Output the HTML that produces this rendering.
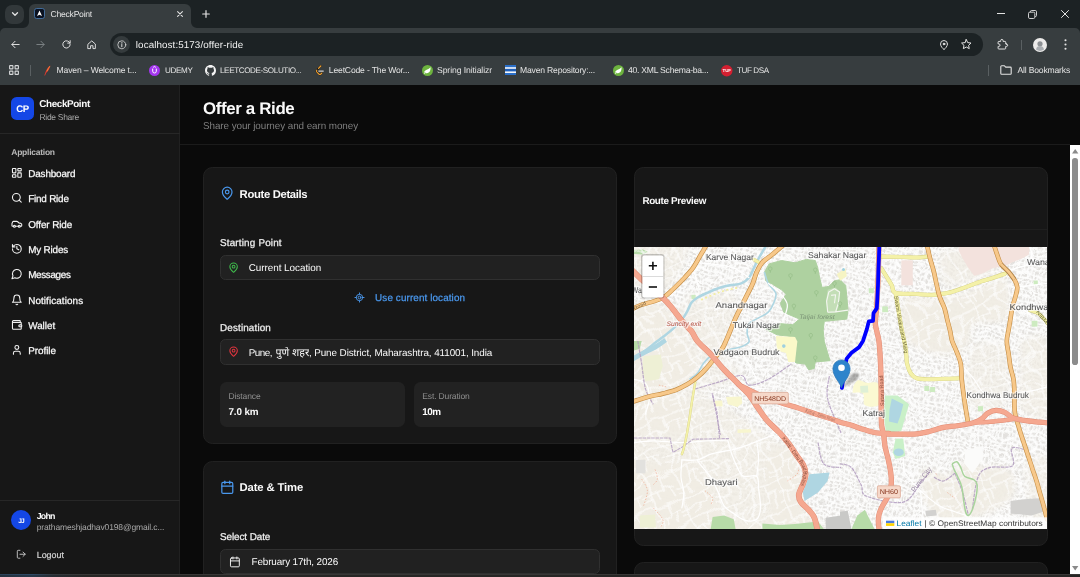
<!DOCTYPE html>
<html lang="en">
<head>
<meta charset="utf-8">
<title>CheckPoint</title>
<style>
html,body{margin:0;padding:0;background:#0a0a0a;}
.t,svg text{text-rendering:geometricPrecision;}
body{width:1080px;height:577px;overflow:hidden;position:relative;will-change:transform;font-family:"Liberation Sans","Noto Sans CJK JP",sans-serif;}
.t{position:absolute;white-space:nowrap;display:block;}
.b{position:absolute;box-sizing:border-box;}
.ic{position:absolute;display:block;overflow:visible;}
svg text{font-family:"Liberation Sans","Noto Sans CJK JP",sans-serif;}
</style>
</head>
<body>
<div class="b" style="left:0px;top:0px;width:1080px;height:85px;background:#1c2224;"></div>
<div class="b" style="left:0px;top:28px;width:1080px;height:57px;background:#373d3f;"></div>
<svg class="ic" style="left:0;top:28px" width="5" height="5" viewBox="0 0 5 5"><path d="M0 0h5a5 5 0 0 0-5 5z" fill="#1c2224"/></svg>
<svg class="ic" style="left:1075px;top:28px" width="5" height="5" viewBox="0 0 5 5"><path d="M5 0H0a5 5 0 0 1 5 5z" fill="#1c2224"/></svg>
<div class="b" style="left:4.6px;top:4.6px;width:19.2px;height:19.2px;background:#32383a;border-radius:7px;"></div>
<svg class="ic" style="left:10.500px;top:10.200px" width="8" height="8" viewBox="0 0 8 8" fill="none" stroke="#e3e3e3" stroke-width="1.3" stroke-linecap="round" stroke-linejoin="round"><path d="M1.5 2.8 4 5.3 6.500 2.800"/></svg>
<div class="b" style="left:28.5px;top:4.2px;width:162.5px;height:24.3px;background:#373d3f;border-radius:6px 6px 0 0;"></div>
<svg class="ic" style="left:22.5px;top:22px" width="6" height="6" viewBox="0 0 6 6"><path d="M6 0v6H0a6 6 0 0 0 6-6z" fill="#373d3f"/></svg>
<svg class="ic" style="left:191px;top:22px" width="6" height="6" viewBox="0 0 6 6"><path d="M0 0v6h6a6 6 0 0 1-6-6z" fill="#373d3f"/></svg>
<svg class="ic" style="left:34px;top:8.300px" width="11" height="11" viewBox="0 0 11 11"><rect x=".5" y=".5" width="10" height="10" rx="2.200" fill="#0b1220" stroke="#4b7fb8" stroke-width=".8"/><path d="M5.500 2.400 8 8 5.500 6.800 3 8z" fill="#fff"/></svg>
<span class="t" id="t1" style="left:50.50px;top:8.61px;font-size:8.6px;line-height:11.18px;font-weight:400;color:#e3e3e3;letter-spacing:-0.245px;">CheckPoint</span>
<svg class="ic" style="left:177px;top:10.800px" width="6" height="6" viewBox="0 0 6 6" stroke="#e3e3e3" stroke-width="1.100" stroke-linecap="round"><path d="M.6.600l4.800 4.800M5.400.600.600 5.400"/></svg>
<svg class="ic" style="left:202px;top:9.800px" width="8" height="8" viewBox="0 0 8 8" stroke="#e3e3e3" stroke-width="1.200" stroke-linecap="round"><path d="M4 .7v6.600M.7 4h6.600"/></svg>
<svg class="ic" style="left:997px;top:13px" width="8" height="1" viewBox="0 0 8 1"><rect width="8" height="1" fill="#e3e3e3"/></svg>
<svg class="ic" style="left:1027.500px;top:9.500px" width="9" height="9" viewBox="0 0 9 9" fill="none" stroke="#e3e3e3" stroke-width=".9"><rect x=".5" y="2.200" width="6.300" height="6.300" rx="1.300"/><path d="M2.400 2V1.700A1.200 1.200 0 0 1 3.600.5h3.700a1.200 1.200 0 0 1 1.200 1.200v3.700a1.200 1.200 0 0 1-1.200 1.200H7"/></svg>
<svg class="ic" style="left:1060.500px;top:9.500px" width="8" height="8" viewBox="0 0 8 8" stroke="#e3e3e3" stroke-width="1" stroke-linecap="round"><path d="M.5.500l7 7M7.500.500l-7 7"/></svg>
<svg class="ic" style="left:10.00px;top:39.00px" width="11" height="11" viewBox="0 0 24 24" fill="none" stroke="#e3e3e3" stroke-width="2.1" stroke-linecap="round" stroke-linejoin="round"><path d="M20 12H4.500M11 5l-7 7 7 7"/></svg>
<svg class="ic" style="left:35.00px;top:39.00px" width="11" height="11" viewBox="0 0 24 24" fill="none" stroke="#7d8385" stroke-width="2.1" stroke-linecap="round" stroke-linejoin="round"><path d="M4 12h15.500M13 5l7 7-7 7"/></svg>
<svg class="ic" style="left:60.50px;top:39.00px" width="11" height="11" viewBox="0 0 24 24" fill="none" stroke="#e3e3e3" stroke-width="2.1" stroke-linecap="round" stroke-linejoin="round"><path d="M19.500 9A8 8 0 1 0 20 12"/><path d="M20 3.500V9h-5.500"/></svg>
<svg class="ic" style="left:85.55px;top:38.75px" width="11.5" height="11.5" viewBox="0 0 24 24" fill="none" stroke="#e3e3e3" stroke-width="2" stroke-linecap="round" stroke-linejoin="round"><path d="M4.500 10.500 12 4l7.500 6.500V20h-5v-6h-5v6h-5z"/></svg>
<div class="b" style="left:110px;top:32.5px;width:872.5px;height:23px;background:#1c2224;border-radius:11.500px;"></div>
<div class="b" style="left:113.3px;top:36.2px;width:17px;height:17px;background:#353b3d;border-radius:8.500px;"></div>
<svg class="ic" style="left:117.00px;top:39.50px" width="9.6" height="9.6" viewBox="0 0 24 24" fill="none" stroke="#e3e3e3" stroke-width="1.9" stroke-linecap="round" stroke-linejoin="round"><circle cx="12" cy="12" r="10"/><path d="M12 11.200v5.600" stroke-width="2.400"/><circle cx="12" cy="7.300" r=".9" fill="#e3e3e3" stroke-width="1"/></svg>
<span class="t" id="t2" style="left:135.80px;top:39.53px;font-size:9.8px;line-height:12.74px;font-weight:400;color:#f2f2f2;letter-spacing:0.102px;">localhost:5173/offer-ride</span>
<svg class="ic" style="left:938.10px;top:39.30px" width="12" height="12" viewBox="0 0 24 24" fill="none" stroke="#e3e3e3" stroke-width="1.9" stroke-linecap="round" stroke-linejoin="round"><path d="M19 10c0 4.600-4.800 9.300-7 11.200C9.800 19.300 5 14.600 5 10a7 7 0 0 1 14 0"/><circle cx="12" cy="10" r="1.800" fill="#e3e3e3"/></svg>
<svg class="ic" style="left:960.40px;top:38.30px" width="12.6" height="12.6" viewBox="0 0 24 24" fill="none" stroke="#e3e3e3" stroke-width="1.9" stroke-linecap="round" stroke-linejoin="round"><path d="M12 3l2.700 5.800 6.300.8-4.600 4.400 1.200 6.300L12 17.200 6.400 20.300l1.200-6.300L3 9.600l6.300-.8z"/></svg>
<svg class="ic" style="left:996.30px;top:37.90px" width="12.6" height="12.6" viewBox="0 0 24 24" fill="none" stroke="#e3e3e3" stroke-width="1.9" stroke-linecap="round" stroke-linejoin="round"><path d="M20 11.500h-1.500V8a1.500 1.500 0 0 0-1.500-1.500h-3.500V5a2.300 2.300 0 0 0-4.600 0v1.500H5.500A1.500 1.500 0 0 0 4 8v3.300h1.300a2.400 2.400 0 0 1 0 4.800H4v3.400A1.500 1.500 0 0 0 5.500 21H17a1.500 1.500 0 0 0 1.500-1.500V16H20a2.250 2.250 0 0 0 0-4.500z"/></svg>
<div class="b" style="left:1020.5px;top:39.5px;width:1px;height:10.5px;background:#5a6062;"></div>
<svg class="ic" style="left:1032.500px;top:37.500px" width="14" height="14" viewBox="0 0 14 14"><circle cx="7" cy="7" r="7" fill="#ecebea"/><circle cx="7" cy="5.800" r="2.600" fill="#8c9094"/><path d="M3 11.500c.6-2.400 2-3.400 4-3.400s3.400 1 4 3.400A6.700 6.700 0 0 1 3 11.500z" fill="#a9adb1"/></svg>
<svg class="ic" style="left:1063.500px;top:39px" width="3" height="11" viewBox="0 0 3 11" fill="#e3e3e3"><circle cx="1.500" cy="1.300" r="1.050"/><circle cx="1.500" cy="5.500" r="1.050"/><circle cx="1.500" cy="9.700" r="1.050"/></svg>
<svg class="ic" style="left:8.500px;top:65.3px" width="10" height="10" viewBox="0 0 10 10" fill="none" stroke="#d6d8d9" stroke-width="1.100"><rect x=".6" y=".6" width="3.300" height="3.300" rx=".5"/><rect x="6.100" y=".6" width="3.300" height="3.300" rx=".5"/><rect x=".6" y="6.100" width="3.300" height="3.300" rx=".5"/><rect x="6.100" y="6.100" width="3.300" height="3.300" rx=".5"/></svg>
<div class="b" style="left:29.8px;top:64.5px;width:1px;height:11px;background:#5a6062;"></div>
<svg class="ic" style="left:41.500px;top:64.8px" width="10" height="11" viewBox="0 0 10 11"><path d="M8.300.6C6.500 1.700 4.700 4.200 3.400 7.300L2.300 10.400l.8.200 1-2.600C6.200 6.300 7.800 3.600 8.300.6z" fill="#e03a2f"/><path d="M7.900 1.200C6.800 2.600 5.800 4.300 5 6.200" stroke="#f7a541" stroke-width=".7" fill="none"/></svg>
<span class="t" id="t3" style="left:56.50px;top:64.91px;font-size:8.6px;line-height:11.18px;font-weight:400;color:#e3e3e3;letter-spacing:-0.148px;">Maven – Welcome t...</span>
<svg class="ic" style="left:149px;top:64.8px" width="11" height="11" viewBox="0 0 11 11"><circle cx="5.500" cy="5.500" r="5.500" fill="#a435f0"/><path d="M3.700 3.600v2.600a1.800 1.800 0 0 0 3.600 0V3.600M4.200 2.300 5.500 1.600l1.300.7" fill="none" stroke="#fff" stroke-width="1"/></svg>
<span class="t" id="t4" style="left:165.00px;top:66.03px;font-size:8.1px;line-height:10.53px;font-weight:400;color:#e3e3e3;letter-spacing:-0.347px;">UDEMY</span>
<svg class="ic" style="left:204.500px;top:64.8px" width="11" height="11" viewBox="0 0 16 16"><path fill="#f4f4f4" d="M8 0C3.580 0 0 3.580 0 8c0 3.540 2.290 6.530 5.470 7.590.4.070.55-.17.550-.38 0-.19-.01-.82-.01-1.490-2.010.37-2.530-.49-2.690-.94-.09-.23-.48-.94-.82-1.130-.28-.15-.68-.52-.01-.53.630-.01 1.080.58 1.230.82.720 1.210 1.870.87 2.330.66.070-.52.280-.87.510-1.070-1.780-.2-3.640-.89-3.640-3.950 0-.87.310-1.590.82-2.150-.08-.2-.36-1.020.08-2.120 0 0 .67-.21 2.200.820.640-.18 1.320-.27 2-.27s1.360.09 2 .27c1.530-1.040 2.200-.82 2.200-.82.440 1.100.16 1.920.08 2.120.51.560.82 1.270.82 2.150 0 3.070-1.870 3.750-3.650 3.950.29.250.54.730.54 1.480 0 1.070-.01 1.930-.01 2.200 0 .21.150.46.550.38A8.010 8.010 0 0 0 16 8c0-4.420-3.580-8-8-8z"/></svg>
<span class="t" id="t5" style="left:220.00px;top:66.03px;font-size:8.1px;line-height:10.53px;font-weight:400;color:#e3e3e3;letter-spacing:-0.385px;">LEETCODE-SOLUTIO...</span>
<svg class="ic" style="left:313.500px;top:64.8px" width="11" height="11" viewBox="0 0 11 11" fill="none" stroke-linecap="round"><path d="M6.800 1 2.900 5a1.500 1.500 0 0 0 0 2.100l1.900 1.900a1.500 1.500 0 0 0 2.100 0l1-1" stroke="#0b0b0b" stroke-width="1.700"/><path d="M6.800 1 4.500 3.400" stroke="#f0a030" stroke-width="1.300"/><path d="M2.900 5a1.500 1.500 0 0 0 0 2.100l1.900 1.900a1.500 1.500 0 0 0 2.100 0l1-1" stroke="#f0a030" stroke-width="1.100"/><path d="M4.800 6.100h4.500" stroke="#cfcfcf" stroke-width="1.100"/></svg>
<span class="t" id="t6" style="left:328.80px;top:64.91px;font-size:8.6px;line-height:11.18px;font-weight:400;color:#e3e3e3;letter-spacing:-0.168px;">LeetCode - The Wor...</span>
<svg class="ic" style="left:421.500px;top:64.8px" width="11" height="11" viewBox="0 0 11 11"><circle cx="5.500" cy="5.500" r="5.500" fill="#6db33f"/><path d="M8.600 2.300c.1 2.900-.7 5.600-3.800 5.900-1.300.1-2.300-.4-2.600-1.200C3.500 4.300 6.300 5 8.600 2.300z" fill="#fff"/><circle cx="2.700" cy="8.200" r=".55" fill="#fff"/></svg>
<span class="t" id="t7" style="left:437.00px;top:64.91px;font-size:8.6px;line-height:11.18px;font-weight:400;color:#e3e3e3;letter-spacing:-0.080px;">Spring Initializr</span>
<svg class="ic" style="left:504.500px;top:65.3px" width="11" height="10" viewBox="0 0 11 10"><rect width="11" height="10" fill="#f5f7fa"/><rect y="0" width="11" height="2.200" fill="#2a6fc9"/><rect y="3.800" width="11" height="2.600" fill="#1f5fb8"/><rect y="8" width="11" height="2" fill="#2a6fc9"/></svg>
<span class="t" id="t8" style="left:520.00px;top:64.91px;font-size:8.6px;line-height:11.18px;font-weight:400;color:#e3e3e3;letter-spacing:-0.191px;">Maven Repository:...</span>
<svg class="ic" style="left:613px;top:64.8px" width="11" height="11" viewBox="0 0 11 11"><circle cx="5.500" cy="5.500" r="5.500" fill="#6db33f"/><path d="M8.600 2.300c.1 2.900-.7 5.600-3.800 5.900-1.300.1-2.300-.4-2.600-1.200C3.500 4.300 6.300 5 8.600 2.300z" fill="#fff"/><circle cx="2.700" cy="8.200" r=".55" fill="#fff"/></svg>
<span class="t" id="t9" style="left:628.00px;top:64.91px;font-size:8.6px;line-height:11.18px;font-weight:400;color:#e3e3e3;letter-spacing:-0.244px;">40. XML Schema-ba...</span>
<svg class="ic" style="left:720.500px;top:64.8px" width="11.500" height="11.500" viewBox="0 0 12 12"><circle cx="6" cy="6" r="6" fill="#d41f30"/><text x="6" y="7.700" font-size="4.600" font-weight="700" fill="#fff" text-anchor="middle">TUF</text></svg>
<span class="t" id="t10" style="left:737.00px;top:66.03px;font-size:8.1px;line-height:10.53px;font-weight:400;color:#e3e3e3;letter-spacing:-0.404px;">TUF DSA</span>
<div class="b" style="left:988px;top:64.5px;width:1px;height:11px;background:#5a6062;"></div>
<svg class="ic" style="left:1000px;top:65.3px" width="12" height="10" viewBox="0 0 12 10" fill="none" stroke="#e3e3e3" stroke-width="1.100" stroke-linejoin="round"><path d="M.8 1.600a.8.800 0 0 1 .8-.8h2.900l1.200 1.300h4.700a.8.800 0 0 1 .8.800v5.500a.8.800 0 0 1-.8.800H1.600a.8.800 0 0 1-.8-.8z"/></svg>
<span class="t" id="t11" style="left:1017.50px;top:64.91px;font-size:8.6px;line-height:11.18px;font-weight:400;color:#e3e3e3;letter-spacing:-0.186px;">All Bookmarks</span>
<div class="b" style="left:0px;top:85px;width:1080px;height:492px;background:#0a0a0a;"></div>
<div class="b" style="left:0px;top:85px;width:180.2px;height:492px;background:#171717;border-right:1px solid #212121;"></div>
<div class="b" style="left:11.25px;top:97px;width:22.5px;height:22.5px;background:#1447e6;border-radius:5.600px;"></div>
<span class="t" id="t12" style="left:16.30px;top:104.26px;font-size:9.6px;line-height:12.48px;font-weight:700;color:#ffffff;letter-spacing:-0.414px;">CP</span>
<span class="t" id="t13" style="left:39.30px;top:98.66px;font-size:9.9px;line-height:12.87px;font-weight:700;color:#fafafa;letter-spacing:-0.383px;">CheckPoint</span>
<span class="t" id="t14" style="left:39.50px;top:112.07px;font-size:8.5px;line-height:11.05px;font-weight:400;color:#a8a8a8;letter-spacing:-0.303px;">Ride Share</span>
<div class="b" style="left:0px;top:132.5px;width:180px;height:1px;background:#272727;"></div>
<span class="t" id="t15" style="left:11.30px;top:146.68px;font-size:8.5px;line-height:11.05px;font-weight:700;color:#b8b8b8;letter-spacing:-0.253px;">Application</span>
<svg class="ic" style="left:10.95px;top:166.95px" width="11.7" height="11.7" viewBox="0 0 24 24" fill="none" stroke="#f2f2f2" stroke-width="2.2" stroke-linecap="round" stroke-linejoin="round"><rect width="7" height="9" x="3" y="3" rx="1"/><rect width="7" height="5" x="14" y="3" rx="1"/><rect width="7" height="9" x="14" y="12" rx="1"/><rect width="7" height="5" x="3" y="16" rx="1"/></svg>
<span class="t" id="t16" style="left:28.20px;top:168.97px;font-size:9.9px;line-height:12.87px;font-weight:400;color:#fafafa;letter-spacing:-0.124px;-webkit-text-stroke:.25px #fafafa;">Dashboard</span>
<svg class="ic" style="left:10.95px;top:192.26px" width="11.7" height="11.7" viewBox="0 0 24 24" fill="none" stroke="#f2f2f2" stroke-width="2.2" stroke-linecap="round" stroke-linejoin="round"><circle cx="11" cy="11" r="8"/><path d="m21 21-4.3-4.3"/></svg>
<span class="t" id="t17" style="left:28.20px;top:194.28px;font-size:9.9px;line-height:12.87px;font-weight:400;color:#fafafa;letter-spacing:-0.196px;-webkit-text-stroke:.25px #fafafa;">Find Ride</span>
<svg class="ic" style="left:10.95px;top:217.57px" width="11.7" height="11.7" viewBox="0 0 24 24" fill="none" stroke="#f2f2f2" stroke-width="2.2" stroke-linecap="round" stroke-linejoin="round"><path d="M19 17h2c.6 0 1-.4 1-1v-3c0-.9-.7-1.700-1.500-1.900C18.700 10.600 16 10 16 10s-1.300-1.400-2.200-2.300c-.5-.4-1.100-.7-1.800-.7H5c-.6 0-1.100.4-1.400.9l-1.400 2.900A3.700 3.700 0 0 0 2 12v4c0 .6.400 1 1 1h2"/><circle cx="7" cy="17" r="2"/><path d="M9 17h6"/><circle cx="17" cy="17" r="2"/></svg>
<span class="t" id="t18" style="left:28.20px;top:219.59px;font-size:9.9px;line-height:12.87px;font-weight:400;color:#fafafa;letter-spacing:-0.083px;-webkit-text-stroke:.25px #fafafa;">Offer Ride</span>
<svg class="ic" style="left:10.95px;top:242.88px" width="11.7" height="11.7" viewBox="0 0 24 24" fill="none" stroke="#f2f2f2" stroke-width="2.2" stroke-linecap="round" stroke-linejoin="round"><path d="M3 12a9 9 0 1 0 9-9 9.750 9.750 0 0 0-6.740 2.740L3 8"/><path d="M3 3v5h5"/><path d="M12 7v5l4 2"/></svg>
<span class="t" id="t19" style="left:28.20px;top:244.89px;font-size:9.9px;line-height:12.87px;font-weight:400;color:#fafafa;letter-spacing:-0.170px;-webkit-text-stroke:.25px #fafafa;">My Rides</span>
<svg class="ic" style="left:10.95px;top:268.19px" width="11.7" height="11.7" viewBox="0 0 24 24" fill="none" stroke="#f2f2f2" stroke-width="2.2" stroke-linecap="round" stroke-linejoin="round"><path d="M7.900 20A9 9 0 1 0 4 16.100L2 22Z"/></svg>
<span class="t" id="t20" style="left:28.20px;top:270.20px;font-size:9.9px;line-height:12.87px;font-weight:400;color:#fafafa;letter-spacing:-0.339px;-webkit-text-stroke:.25px #fafafa;">Messages</span>
<svg class="ic" style="left:10.95px;top:293.50px" width="11.7" height="11.7" viewBox="0 0 24 24" fill="none" stroke="#f2f2f2" stroke-width="2.2" stroke-linecap="round" stroke-linejoin="round"><path d="M6 8a6 6 0 0 1 12 0c0 7 3 9 3 9H3s3-2 3-9"/><path d="M10.300 21a1.940 1.940 0 0 0 3.400 0"/></svg>
<span class="t" id="t21" style="left:28.20px;top:295.51px;font-size:9.9px;line-height:12.87px;font-weight:400;color:#fafafa;letter-spacing:0.093px;-webkit-text-stroke:.25px #fafafa;">Notifications</span>
<svg class="ic" style="left:10.95px;top:318.81px" width="11.7" height="11.7" viewBox="0 0 24 24" fill="none" stroke="#f2f2f2" stroke-width="2.2" stroke-linecap="round" stroke-linejoin="round"><path d="M19 7V4a1 1 0 0 0-1-1H5a2 2 0 0 0 0 4h15a1 1 0 0 1 1 1v4h-3a2 2 0 0 0 0 4h3a1 1 0 0 0 1-1v-2a1 1 0 0 0-1-1"/><path d="M3 5v14a2 2 0 0 0 2 2h15a1 1 0 0 0 1-1v-4"/></svg>
<span class="t" id="t22" style="left:28.20px;top:320.82px;font-size:9.9px;line-height:12.87px;font-weight:400;color:#fafafa;letter-spacing:-0.013px;-webkit-text-stroke:.25px #fafafa;">Wallet</span>
<svg class="ic" style="left:10.95px;top:344.12px" width="11.7" height="11.7" viewBox="0 0 24 24" fill="none" stroke="#f2f2f2" stroke-width="2.2" stroke-linecap="round" stroke-linejoin="round"><path d="M19 21v-2a4 4 0 0 0-4-4H9a4 4 0 0 0-4 4v2"/><circle cx="12" cy="7" r="4"/></svg>
<span class="t" id="t23" style="left:28.20px;top:346.13px;font-size:9.9px;line-height:12.87px;font-weight:400;color:#fafafa;letter-spacing:-0.029px;-webkit-text-stroke:.25px #fafafa;">Profile</span>
<div class="b" style="left:0px;top:499.5px;width:180px;height:1px;background:#272727;"></div>
<div class="b" style="left:11.2px;top:510.3px;width:19.8px;height:19.8px;background:#1447e6;border-radius:50%;"></div>
<span class="t" id="t24" style="left:18.20px;top:517.61px;font-size:6.6px;line-height:8.58px;font-weight:700;color:#fff;letter-spacing:-0.772px;">JJ</span>
<span class="t" id="t25" style="left:36.70px;top:510.88px;font-size:8.8px;line-height:11.44px;font-weight:700;color:#fafafa;letter-spacing:-0.754px;">John</span>
<span class="t" id="t26" style="left:36.70px;top:522.38px;font-size:8.5px;line-height:11.05px;font-weight:400;color:#a8a8a8;letter-spacing:-0.129px;">prathameshjadhav0198@gmail.c...</span>
<svg class="ic" style="left:16.25px;top:549.15px" width="10.5" height="10.5" viewBox="0 0 24 24" fill="none" stroke="#d0d0d0" stroke-width="2" stroke-linecap="round" stroke-linejoin="round"><path d="M9 21H5a2 2 0 0 1-2-2V5a2 2 0 0 1 2-2h4"/><polyline points="16 17 21 12 16 7"/><line x1="21" x2="9" y1="12" y2="12"/></svg>
<span class="t" id="t27" style="left:36.70px;top:550.12px;font-size:8.9px;line-height:11.57px;font-weight:400;color:#d6d6d6;letter-spacing:0.007px;-webkit-text-stroke:.2px #d6d6d6;">Logout</span>
<span class="t" id="t28" style="left:202.90px;top:98.22px;font-size:16.9px;line-height:21.97px;font-weight:700;color:#fafafa;letter-spacing:-0.354px;">Offer a Ride</span>
<span class="t" id="t29" style="left:203.00px;top:121.46px;font-size:9.9px;line-height:12.87px;font-weight:400;color:#7f7f7f;letter-spacing:-0.077px;">Share your journey and earn money</span>
<div class="b" style="left:180.2px;top:144px;width:890px;height:1px;background:#1b1b1b;"></div>
<div class="b" style="left:202.5px;top:167px;width:414.5px;height:276.5px;background:#171717;border:1px solid #212121;border-radius:9.500px;"></div>
<svg class="ic" style="left:220.00px;top:186.10px" width="14.4" height="14.4" viewBox="0 0 24 24" fill="none" stroke="#4a98ee" stroke-width="2" stroke-linecap="round" stroke-linejoin="round"><path d="M20 10c0 4.993-5.539 10.193-7.399 11.799a1 1 0 0 1-1.202 0C9.539 20.193 4 14.993 4 10a8 8 0 0 1 16 0"/><circle cx="12" cy="10" r="3"/></svg>
<span class="t" id="t30" style="left:239.60px;top:187.96px;font-size:11.3px;line-height:14.69px;font-weight:700;color:#fafafa;letter-spacing:-0.346px;">Route Details</span>
<span class="t" id="t31" style="left:220.00px;top:237.67px;font-size:9.9px;line-height:12.87px;font-weight:400;color:#f0f0f0;letter-spacing:0.179px;-webkit-text-stroke:.25px #f0f0f0;">Starting Point</span>
<div class="b" style="left:220px;top:255px;width:379.5px;height:25px;background:#212121;border:1px solid #303030;border-radius:5.500px;"></div>
<svg class="ic" style="left:228.30px;top:261.90px" width="11.2" height="11.2" viewBox="0 0 24 24" fill="none" stroke="#3fbb4c" stroke-width="2.2" stroke-linecap="round" stroke-linejoin="round"><path d="M20 10c0 4.993-5.539 10.193-7.399 11.799a1 1 0 0 1-1.202 0C9.539 20.193 4 14.993 4 10a8 8 0 0 1 16 0"/><circle cx="12" cy="10" r="3"/></svg>
<span class="t" id="t32" style="left:248.70px;top:263.47px;font-size:9.9px;line-height:12.87px;font-weight:400;color:#fafafa;letter-spacing:-0.032px;">Current Location</span>
<svg class="ic" style="left:354.20px;top:292.10px" width="11" height="11" viewBox="0 0 24 24" fill="none" stroke="#4a98ee" stroke-width="2" stroke-linecap="round" stroke-linejoin="round"><line x1="2" x2="5" y1="12" y2="12"/><line x1="19" x2="22" y1="12" y2="12"/><line x1="12" x2="12" y1="2" y2="5"/><line x1="12" x2="12" y1="19" y2="22"/><circle cx="12" cy="12" r="7"/><circle cx="12" cy="12" r="3"/></svg>
<span class="t" id="t33" style="left:375.10px;top:292.56px;font-size:9.9px;line-height:12.87px;font-weight:400;color:#4a98ee;letter-spacing:0.109px;-webkit-text-stroke:.25px #4a98ee;">Use current location</span>
<span class="t" id="t34" style="left:220.00px;top:323.26px;font-size:9.9px;line-height:12.87px;font-weight:400;color:#f0f0f0;letter-spacing:0.145px;-webkit-text-stroke:.25px #f0f0f0;">Destination</span>
<div class="b" style="left:220px;top:339.2px;width:379.5px;height:25.6px;background:#212121;border:1px solid #303030;border-radius:5.500px;"></div>
<svg class="ic" style="left:228.30px;top:346.40px" width="11.2" height="11.2" viewBox="0 0 24 24" fill="none" stroke="#e0353f" stroke-width="2.2" stroke-linecap="round" stroke-linejoin="round"><path d="M20 10c0 4.993-5.539 10.193-7.399 11.799a1 1 0 0 1-1.202 0C9.539 20.193 4 14.993 4 10a8 8 0 0 1 16 0"/><circle cx="12" cy="10" r="3"/></svg>
<span class="t" id="t35" style="left:248.70px;top:348.06px;font-size:9.9px;line-height:12.87px;font-weight:400;color:#fafafa;letter-spacing:-0.502px;">Pune,</span>
<span class="t" id="t36" style="left:275.50px;top:347.11px;font-size:10.6px;line-height:13.78px;font-weight:400;color:#fafafa;width:33px;overflow:hidden;">पुणे शहर</span>
<span class="t" id="t37" style="left:308.90px;top:348.06px;font-size:9.9px;line-height:12.87px;font-weight:400;color:#fafafa;letter-spacing:-0.086px;">, Pune District, Maharashtra, 411001, India</span>
<div class="b" style="left:220px;top:381.8px;width:185px;height:45.4px;background:#222222;border-radius:6.500px;"></div>
<div class="b" style="left:413.8px;top:381.8px;width:185.7px;height:45.4px;background:#222222;border-radius:6.500px;"></div>
<span class="t" id="t38" style="left:228.50px;top:391.18px;font-size:8.5px;line-height:11.05px;font-weight:400;color:#8f8f8f;letter-spacing:-0.135px;">Distance</span>
<span class="t" id="t39" style="left:228.50px;top:406.87px;font-size:9.9px;line-height:12.87px;font-weight:700;color:#fafafa;letter-spacing:-0.125px;">7.0 km</span>
<span class="t" id="t40" style="left:422.30px;top:391.18px;font-size:8.5px;line-height:11.05px;font-weight:400;color:#8f8f8f;letter-spacing:-0.142px;">Est. Duration</span>
<span class="t" id="t41" style="left:422.30px;top:406.87px;font-size:9.9px;line-height:12.87px;font-weight:700;color:#fafafa;letter-spacing:-0.489px;">10m</span>
<div class="b" style="left:202.5px;top:461.2px;width:414.5px;height:130px;background:#171717;border:1px solid #212121;border-radius:9.500px;"></div>
<svg class="ic" style="left:219.50px;top:479.50px" width="14.6" height="14.6" viewBox="0 0 24 24" fill="none" stroke="#4a98ee" stroke-width="2" stroke-linecap="round" stroke-linejoin="round"><path d="M8 2v4"/><path d="M16 2v4"/><rect width="18" height="18" x="3" y="4" rx="2"/><path d="M3 10h18"/></svg>
<span class="t" id="t42" style="left:239.60px;top:481.35px;font-size:11.3px;line-height:14.69px;font-weight:700;color:#fafafa;letter-spacing:-0.145px;">Date &amp; Time</span>
<span class="t" id="t43" style="left:220.00px;top:532.16px;font-size:9.9px;line-height:12.87px;font-weight:400;color:#f0f0f0;letter-spacing:-0.069px;-webkit-text-stroke:.25px #f0f0f0;">Select Date</span>
<div class="b" style="left:220px;top:548.9px;width:379.5px;height:25.3px;background:#212121;border:1px solid #303030;border-radius:5.500px;"></div>
<svg class="ic" style="left:228.70px;top:555.50px" width="11.8" height="11.8" viewBox="0 0 24 24" fill="none" stroke="#f0f0f0" stroke-width="2" stroke-linecap="round" stroke-linejoin="round"><path d="M8 2v4"/><path d="M16 2v4"/><rect width="18" height="18" x="3" y="4" rx="2"/><path d="M3 10h18"/></svg>
<span class="t" id="t44" style="left:251.50px;top:557.47px;font-size:9.9px;line-height:12.87px;font-weight:400;color:#fafafa;letter-spacing:-0.128px;">February 17th, 2026</span>
<div class="b" style="left:634px;top:167px;width:413.5px;height:379px;background:#171717;border:1px solid #212121;border-radius:9.500px;"></div>
<span class="t" id="t45" style="left:642.40px;top:195.67px;font-size:9.9px;line-height:12.87px;font-weight:700;color:#fafafa;letter-spacing:-0.343px;">Route Preview</span>
<div class="b" style="left:635px;top:229.4px;width:411.5px;height:1px;background:#1f1f1f;"></div>
<div class="b" style="left:634px;top:562.3px;width:413.5px;height:40px;background:#171717;border:1px solid #212121;border-radius:9.500px;"></div>
<div class="b" style="left:1070px;top:144.5px;width:10px;height:429px;background:#ffffff;"></div>
<div class="b" style="left:1072.3px;top:158px;width:5.6px;height:206.8px;background:#8c8c8c;border-radius:2.800px;"></div>
<svg class="ic" style="left:1072px;top:148.500px" width="6.400" height="4.600" viewBox="0 0 64 46"><path d="M32 0 64 46H0z" fill="#8a8a8a"/></svg>
<svg class="ic" style="left:1072px;top:566px" width="6.400" height="4.600" viewBox="0 0 64 46"><path d="M0 0h64L32 46z" fill="#8a8a8a"/></svg>
<div class="b" style="left:0px;top:573.7px;width:1080px;height:3.3px;background:#262625;background:linear-gradient(90deg,#243240 0,#26384a 3%,#262c32 5%,#272625 8%,#272625 100%);"></div>
<div class="b" style="left:0px;top:573.7px;width:1080px;height:1px;background:#383736;background:linear-gradient(90deg,#2c4258 0,#2f4a66 3%,#33383c 5%,#383736 8%,#383736 100%);"></div>
<svg class="ic" id="map" style="left:634px;top:247px;overflow:hidden" width="413" height="281.500" viewBox="0 0 413 281.500"><rect width="413" height="281.500" fill="#f1eee8"/>
<defs>
<pattern id="st" width="17" height="15" patternUnits="userSpaceOnUse" patternTransform="rotate(17)">
<rect width="17" height="15" fill="#fcfcfb"/>
<path d="M1 1h3v2.500h-3zM5.500 1h4.500v2h-4.500zM11.500 .5h4v3h-4zM.5 5h2.500v4h-2.500zM4.500 5.500h3v2h-3zM9 5h2.500v3.500h-2.500zM13 5.500h3.500v2.500h-3.500zM1 10.500h4v3h-4zM6.500 9.500h2.500v4.500h-2.500zM10.500 10h2v3.500h-2zM14 10.500h2.500v3h-2.500z" fill="#e3e1de"/>
</pattern>
<pattern id="wl" width="31" height="27" patternUnits="userSpaceOnUse" patternTransform="rotate(-24)">
<path d="M0 5h31M0 18h19M19 14h12M7 0v27M19 5v13M26 14v13M13 18v9M0 24h7" stroke="#fff" stroke-width="1.150" fill="none"/>
</pattern>
<filter id="warp2" x="0" y="0" width="100%" height="100%"><feTurbulence type="fractalNoise" baseFrequency="0.035" numOctaves="2" seed="3" result="n"/><feDisplacementMap in="SourceGraphic" in2="n" scale="22" xChannelSelector="R" yChannelSelector="G"/><feGaussianBlur stdDeviation=".35"/></filter>
<filter id="halo" x="-5%" y="-30%" width="110%" height="160%"><feMorphology in="SourceAlpha" operator="dilate" radius=".75" result="d"/><feGaussianBlur in="d" stdDeviation=".35" result="b"/><feFlood flood-color="#fff" flood-opacity=".8"/><feComposite in2="b" operator="in" result="h"/><feMerge><feMergeNode in="h"/><feMergeNode in="SourceGraphic"/></feMerge></filter>
<filter id="soft" x="-10%" y="-10%" width="120%" height="120%"><feGaussianBlur stdDeviation="1.200"/></filter>
<filter id="soft2" x="-20%" y="-20%" width="140%" height="140%"><feGaussianBlur stdDeviation="3"/></filter>
<filter id="warp" x="0" y="0" width="100%" height="100%"><feTurbulence type="fractalNoise" baseFrequency="0.06" numOctaves="2" seed="7" result="n"/><feDisplacementMap in="SourceGraphic" in2="n" scale="12" xChannelSelector="R" yChannelSelector="G"/><feGaussianBlur stdDeviation=".55"/></filter>
</defs>
<g filter="url(#warp)"><rect x="-20" y="-20" width="453" height="322" fill="url(#st)"/></g>
<path d="M269.3 49.8 C274.0 50.2 288.7 52.1 298.0 51.8 C307.3 51.4 315.3 50.5 324.8 47.9 C334.4 45.4 347.8 39.0 355.5 36.4 C363.2 33.9 367.7 30.3 370.8 32.6 C374.0 34.8 374.7 43.1 374.7 49.8 C374.7 56.5 376.6 68.4 370.8 72.8 C365.1 77.3 346.6 72.2 340.2 76.7 C333.8 81.1 337.0 94.6 332.5 99.7 C328.0 104.8 320.4 106.7 313.3 107.3 C306.3 108.0 297.0 106.1 290.3 103.5 C283.6 101.0 276.9 97.8 273.1 92.0 C269.3 86.3 268.3 72.8 267.3 69.0Z" fill="#f1ede4" opacity="0.92" filter="url(#soft2)"/>
<path d="M305.7 5.8 C309.5 5.4 319.1 1.0 328.7 3.8 C338.3 6.7 361.3 18.2 363.2 23.0 C365.1 27.8 348.5 30.0 340.2 32.6 C331.9 35.1 319.1 39.9 313.3 38.3 C307.6 36.7 307.0 25.6 305.7 23.0Z" fill="#f1ede4" opacity="0.74" filter="url(#soft2)"/>
<path d="M-3.8 59.5 C-1.3 58.9 5.4 54.7 11.5 55.7 C17.6 56.6 27.2 60.8 32.6 65.2 C38.0 69.7 40.3 76.4 44.1 82.5 C47.9 88.6 52.4 95.6 55.6 101.7 C58.8 107.7 64.2 113.2 63.3 118.9 C62.3 124.7 57.2 131.7 49.8 136.2 C42.5 140.6 28.1 143.5 19.2 145.8 C10.2 148.0 0.0 148.9 -3.8 149.6Z" fill="#f1ede4" opacity="0.92" filter="url(#soft2)"/>
<path d="M-3.8 157.3 C1.6 156.3 20.1 152.1 28.8 151.5 C37.4 150.9 43.1 149.6 47.9 153.4 C52.7 157.3 57.8 169.1 57.5 174.5 C57.2 179.9 56.2 184.4 46.0 186.0 C35.8 187.6 4.5 184.4 -3.8 184.1Z" fill="#f1ede4" opacity="0.78" filter="url(#soft2)"/>
<path d="M-3.8 216.8 C4.2 216.8 33.2 215.8 44.1 216.8 C54.9 217.7 55.9 217.7 61.3 222.5 C66.8 227.3 72.5 238.5 76.7 245.5 C80.8 252.5 81.1 259.2 86.3 264.7 C91.4 270.1 99.4 276.2 107.3 278.1 C115.3 280.0 129.1 281.6 134.2 276.2 C139.3 270.7 138.0 255.4 138.0 245.5 C138.0 235.6 131.0 223.8 134.2 216.8 C137.4 209.7 152.1 201.7 157.2 203.3 C162.3 204.9 164.2 218.3 164.8 226.3 C165.5 234.3 159.7 244.2 161.0 251.3 C162.3 258.3 169.6 263.1 172.5 268.5 C175.4 273.9 207.7 281.3 178.3 283.8 C148.9 286.4 26.5 283.8 -3.8 283.8Z" fill="#f1ede4" opacity="0.92" filter="url(#soft2)"/>
<path d="M132.3 211.0 C135.8 209.1 148.2 198.5 153.3 199.5 C158.5 200.5 161.7 209.1 162.9 216.8 C164.2 224.4 165.8 239.8 161.0 245.5 C156.2 251.3 138.6 250.3 134.2 251.3Z" fill="#f1ede4" opacity="0.74" filter="url(#soft2)"/>
<path d="M52 48 L100 46 L104 60 L92 92 L80 114 L66 100 L50 76Z" fill="#f1ede4" opacity=".6" filter="url(#soft2)"/>
<path d="M-20 -20 L62 -20 L48 22 L30 44 L-20 52Z" fill="#f1ede4" opacity=".7" filter="url(#soft2)"/>
<path d="M0 3 L9 2.500 L14 5 L8 7.500 L0 7Z" fill="#b7dba8"/>
<path d="M-20 150 L40 146 L75 150 L110 172 L150 200 L172 240 L168 290 L-20 290Z" fill="#f1ede4" opacity=".75" filter="url(#soft2)"/>
<path d="M-20 60 L45 55 L80 90 L110 130 L60 150 L-20 150Z" fill="#f1ede4" opacity=".55" filter="url(#soft2)"/>
<path d="M288.4 220.6 C292.6 221.9 306.6 228.9 313.3 228.3 C320.1 227.6 322.3 218.0 328.7 216.8 C335.1 215.5 344.0 219.6 351.7 220.6 C359.3 221.5 370.2 217.7 374.7 222.5 C379.2 227.3 384.3 241.4 378.5 249.3 C372.8 257.3 352.3 266.6 340.2 270.4 C328.0 274.3 314.3 275.5 305.7 272.3 C297.0 269.1 291.3 254.8 288.4 251.3Z" fill="#f1ede4" opacity="0.92" filter="url(#soft2)"/>
<path d="M336.3 97.8 C342.1 98.2 365.1 89.8 370.8 99.8 C376.6 109.7 376.0 147.0 370.8 157.3 C365.7 167.5 346.6 165.2 340.2 161.1 C333.8 156.9 333.8 137.1 332.5 132.3Z" fill="#f1ede4" opacity="0.64" filter="url(#soft2)"/>
<path d="M386.2 94.0 C390.7 94.0 408.5 81.9 413.0 94.0 C417.5 106.1 417.5 155.3 413.0 166.8 C408.5 178.3 390.7 163.6 386.2 163.0Z" fill="#f1ede4" opacity="0.74" filter="url(#soft2)"/>
<path d="M390.0 216.8 C393.8 215.8 409.2 200.1 413.0 211.0 C416.8 221.9 415.6 270.1 413.0 281.9 C410.5 293.7 400.2 281.9 397.7 281.9Z" fill="#f1ede4" opacity="0.64" filter="url(#soft2)"/>
<g filter="url(#warp2)" opacity=".95"><rect x="-30" y="-30" width="473" height="342" fill="url(#wl)"/></g>
<path d="M130.6 24.8 L135.1 16.9 L147.5 13.5 L161.0 15.8 L172.3 12.4 L181.3 13.5 L183.6 20.3 L185.8 31.5 L188.1 40.5 L194.8 39.4 L200.5 33.8 L206.1 32.7 L211.7 38.3 L212.8 49.5 L214.0 63.1 L212.8 72.1 L201.6 73.2 L190.3 74.3 L189.2 83.3 L190.3 94.6 L193.7 105.9 L196.0 113.7 L181.3 114.9 L180.2 121.6 L174.6 122.7 L171.2 117.1 L162.2 116.0 L161.0 114.9 L163.3 94.6 L161.0 90.1 L143.0 87.8 L138.5 85.6 L131.8 82.2 L145.3 76.6 L158.8 77.7 L165.5 72.1 L149.8 65.3 L146.4 56.3 L152.0 47.3 L147.5 42.8 L138.5 37.2 L131.8 33.8Z" fill="#aed1a0" stroke="#aed1a0" stroke-width="1" stroke-linejoin="round"/>
<path d="M193.7 42.8 L201.6 40.5 L206.1 45.0 L205.0 56.3 L202.7 65.3 L193.7 65.8 L192.1 54.1Z" fill="#c3deb6"/>
<path d="M193.7 65.3 L192.6 54.1 L194.8 45.0 L200.5 41.7 L205.6 45.0 L204.3 56.3 L201.6 64.9 L193.7 65.3 M197.1 48.4 L201.6 47.7 L200.5 56.3 M201.6 64.9 L214.0 63.1" fill="none" stroke="#f4f6f0" stroke-width="1.100" stroke-linejoin="round"/>
<path d="M141.9 89.0 L161.0 90.1 L163.3 94.6 L161.0 114.9 L154.3 114.9 L152.0 105.9 L143.0 103.6Z" fill="#fbf9c9"/>
<path d="M202.7 27.0 L211.7 21.4 L212.8 29.3 L206.1 33.8Z" fill="#f6f4c4"/>
<circle cx="149.8" cy="99.1" r="1.800" fill="#9ed0e0"/>
<circle cx="209.5" cy="22.5" r="1.500" fill="#9ed0e0"/>
<path d="M136.3 19.9c1.500 0 2 1.300 1.500 2.500-.4 1-1 1.400-1.500 1.400s-1.100-.4-1.500-1.400c-.5-1.200 0-2.500 1.500-2.500zM136.3 23.8v2" fill="none" stroke="#8fb982" stroke-width=".6"/>
<path d="M156.5 26.7c1.500 0 2 1.300 1.500 2.500-.4 1-1 1.400-1.500 1.400s-1.100-.4-1.500-1.400c-.5-1.200 0-2.500 1.500-2.500zM156.5 30.6v2" fill="none" stroke="#8fb982" stroke-width=".6"/>
<path d="M181.3 21.0c1.500 0 2 1.300 1.500 2.500-.4 1-1 1.400-1.500 1.400s-1.100-.4-1.500-1.400c-.5-1.200 0-2.500 1.500-2.500zM181.3 24.9v2" fill="none" stroke="#8fb982" stroke-width=".6"/>
<path d="M182.4 43.6c1.500 0 2 1.300 1.500 2.500-.4 1-1 1.400-1.500 1.400s-1.100-.4-1.500-1.400c-.5-1.200 0-2.500 1.500-2.500zM182.4 47.5v2" fill="none" stroke="#8fb982" stroke-width=".6"/>
<path d="M159.9 57.1c1.500 0 2 1.300 1.500 2.500-.4 1-1 1.400-1.500 1.400s-1.100-.4-1.500-1.400c-.5-1.200 0-2.500 1.500-2.500zM159.9 61.0v2" fill="none" stroke="#8fb982" stroke-width=".6"/>
<path d="M206.1 54.8c1.500 0 2 1.300 1.500 2.500-.4 1-1 1.400-1.500 1.400s-1.100-.4-1.500-1.400c-.5-1.200 0-2.500 1.500-2.500zM206.1 58.7v2" fill="none" stroke="#8fb982" stroke-width=".6"/>
<path d="M156.5 80.7c1.500 0 2 1.300 1.500 2.500-.4 1-1 1.400-1.500 1.400s-1.100-.4-1.500-1.400c-.5-1.200 0-2.500 1.500-2.500zM156.5 84.6v2" fill="none" stroke="#8fb982" stroke-width=".6"/>
<path d="M176.8 86.4c1.500 0 2 1.300 1.500 2.500-.4 1-1 1.400-1.500 1.400s-1.100-.4-1.500-1.400c-.5-1.200 0-2.500 1.500-2.500zM176.8 90.3v2" fill="none" stroke="#8fb982" stroke-width=".6"/>
<path d="M181.3 108.9c1.500 0 2 1.300 1.500 2.500-.4 1-1 1.400-1.500 1.400s-1.100-.4-1.500-1.400c-.5-1.200 0-2.500 1.500-2.500zM181.3 112.8v2" fill="none" stroke="#8fb982" stroke-width=".6"/>
<path d="M200.5 34.6c1.500 0 2 1.300 1.500 2.500-.4 1-1 1.400-1.500 1.400s-1.100-.4-1.500-1.400c-.5-1.200 0-2.500 1.500-2.500zM200.5 38.5v2" fill="none" stroke="#8fb982" stroke-width=".6"/>
<path d="M219.4 139.0 C220.2 138.1 222.0 133.8 224.2 133.3 C226.4 132.8 229.5 135.1 232.8 135.8 C236.2 136.4 242.3 133.6 244.3 137.1 C246.4 140.7 247.5 153.7 245.3 157.3 C243.1 160.8 233.6 160.0 230.9 158.2 C228.2 156.5 231.1 148.8 229.0 146.7 C226.9 144.6 220.2 145.9 218.5 145.8Z" fill="#fbf9d2"/>
<path d="M226.1 139.0 L233.8 138.5 L234.4 145.4 L226.7 145.8Z" fill="#dff0d6"/>
<path d="M92.0 150.0 L107.3 149.6 L108.3 156.3 L103.5 160.1 L93.9 157.3Z" fill="#f8f6cf"/>
<path d="M80.5 153.8 L88.2 153.4 L88.6 159.6 L81.5 159.2Z" fill="#f8f6cf"/>
<path d="M103.5 182.6 L116.9 182.2 L116.9 185.6 L103.5 186.0Z" fill="#f8f6cf"/>
<path d="M9.6 109.3 L26.8 107.4 L28.8 118.9 L24.9 132.3 L11.5 134.3 L7.7 122.8Z" fill="#eef0d5"/>
<path d="M5.8 268.5 L21.1 267.5 L22.0 280.6 L5.8 280.6Z" fill="#eef0d5"/>
<path d="M324.8 0.0 L395.8 0.0 L394.8 7.7 L388.1 11.5 L378.5 15.3 L370.8 19.2 L359.3 21.1 L347.8 26.8 L340.2 28.8 L334.4 21.1 L328.7 11.5 L324.8 3.8Z" fill="#f3e2dd"/>
<path d="M267.3 13.4 L278.8 13.4 L278.8 38.3 L267.3 38.3Z" fill="#f3e2dd"/>
<path d="M251.0 148.6 L263.5 148.6 L275.0 157.3 L271.2 170.7 L267.3 184.1 L252.0 186.0 L250.1 170.7Z" fill="#c9f0c8"/>
<path d="M257.8 151.5 L269.3 157.3 L266.4 168.8 L263.5 176.4 L254.9 174.5 L255.5 163.0Z" fill="#afd6e2"/>
<path d="M261.6 191.8 L269.3 191.8 L271.2 209.1 L261.6 212.0 L258.7 205.3Z" fill="#c9f0c8"/>
<ellipse cx="264.7" cy="205.3" rx="5" ry="3.800" fill="#afd6e2"/>
<path d="M175.4 227.3 L195.5 225.4 L193.6 234.0 L184.0 245.5 L170.6 254.1 L168.7 245.5 L172.5 235.9Z" fill="#afd6e2"/>
<path d="M78.6 270.0 L90.1 268.5 L99.7 272.3 L101.6 281.9 L76.7 281.9Z" fill="#b7dba8"/>
<path d="M128.4 276.6 L145.7 278.1 L161.0 277.1 L184.0 274.6 L189.8 281.9 L128.4 281.9Z" fill="#b7dba8"/>
<path d="M223.3 268.5 L230.9 262.8 L240.5 281.9 L217.5 281.9Z" fill="#b7dba8"/>
<path d="M0.0 94.0 L7.7 94.0 L5.8 101.7 L0.0 103.6Z" fill="#b7dba8"/>
<rect x="397.7" y="73.8" width="5.8" height="5.8" fill="#cdebc0"/>
<rect x="399.6" y="33.5" width="4.2" height="4.2" fill="#cdebc0"/>
<rect x="57.5" y="47.9" width="4.2" height="4.2" fill="#cdebc0"/>
<rect x="344.0" y="159.2" width="5.0" height="5.0" fill="#cdebc0"/>
<rect x="290.3" y="139.0" width="5.0" height="5.0" fill="#cdebc0"/>
<rect x="296.1" y="140.0" width="5.0" height="5.0" fill="#cdebc0"/>
<rect x="234.8" y="41.2" width="5.0" height="5.0" fill="#cdebc0"/>
<rect x="248.2" y="59.4" width="5.8" height="5.8" fill="#cdebc0"/>
<path d="M191.7 270.8 L207.0 268.5 L210.8 281.9 L191.7 281.9Z" fill="#c9c9c7"/>
<path d="M206.0 264.7 L213.7 263.7 L217.5 281.9 L206.0 281.9Z" fill="#c9c9c7"/>
<path d="M376.6 254.1 L390.0 252.2 L405.3 251.3 L409.2 264.7 L397.7 268.5 L376.6 266.6Z" fill="#d2d1cf"/>
<path d="M291.3 263.7 L301.8 262.8 L302.8 268.5 L292.3 269.5Z" fill="#d2d1cf"/>
<path d="M1.9 212.9 L11.5 212.9 L11.5 226.3 L1.9 226.3Z" fill="#e2e1de"/>
<path d="M330.6 203.3 L347.8 199.5 L349.8 209.1 L344.0 218.7 L338.3 226.3 L330.6 216.8Z" fill="#fbfbfa"/>
<path d="M-1.9 112.2 C0.0 111.2 5.8 107.9 9.6 105.9 C13.4 103.9 17.4 102.3 21.1 100.1 C24.8 98.0 29.9 94.2 31.6 93.0" fill="none" stroke="#afd6e2" stroke-width="4.800"/>
<path d="M131.9 -1.0 C130.7 1.1 126.6 7.8 124.6 11.5 C122.6 15.2 121.4 17.9 119.8 21.1 C118.2 24.3 117.1 28.1 115.0 30.7 C112.9 33.2 110.5 35.1 107.3 36.4 C104.1 37.7 99.7 37.5 95.8 38.3 C92.0 39.1 88.2 39.9 84.3 41.2 C80.5 42.5 76.4 44.4 72.8 46.0 C69.3 47.6 65.8 49.2 63.3 50.8 C60.7 52.4 59.1 53.5 57.5 55.6 C55.9 57.7 55.3 60.4 53.7 63.3 C52.1 66.1 50.5 69.6 47.9 72.8 C45.4 76.0 41.5 79.5 38.3 82.4 C35.1 85.3 31.6 87.9 28.8 90.1 C25.9 92.3 24.0 93.6 21.1 95.8 C18.2 98.1 15.0 100.8 11.5 103.5 C8.0 106.2 1.9 110.7 0.0 112.1" fill="none" stroke="#afd6e2" stroke-width="2.500"/>
<path d="M130.3 24.9 C131.0 26.8 132.3 32.9 134.2 36.4 C136.1 39.9 140.9 42.8 141.8 46.0 C142.8 49.2 141.2 52.4 139.9 55.6 C138.6 58.8 136.7 62.6 134.2 65.2 C131.6 67.7 127.8 69.0 124.6 70.9 C121.4 72.8 116.9 74.1 115.0 76.7 C113.1 79.2 113.1 83.2 113.1 86.3 C113.1 89.3 116.0 92.6 115.0 94.9 C114.1 97.1 111.2 98.2 107.3 99.7 C103.5 101.1 97.1 101.9 92.0 103.5 C86.9 105.1 80.5 107.0 76.7 109.3 C72.8 111.5 71.2 114.1 69.0 116.9 C66.8 119.8 65.5 124.0 63.3 126.5 C61.0 129.1 56.9 131.3 55.6 132.3" fill="none" stroke="#afd6e2" stroke-width="1.600"/>
<path d="M47.9 212.9 C50.5 212.9 58.5 213.9 63.3 212.9 C68.0 212.0 72.2 208.6 76.7 207.2 C81.1 205.7 86.3 205.1 90.1 204.3 C93.9 203.5 95.5 203.5 99.7 202.4 C103.8 201.3 109.3 199.7 115.0 197.6 C120.8 195.5 130.0 191.5 134.2 189.9 C138.3 188.3 139.0 188.3 139.9 188.0" fill="none" stroke="#ffffff" stroke-width="1.4" stroke-linecap="round" stroke-linejoin="round"/>
<path d="M93.9 193.8 C94.6 196.0 96.2 202.7 97.8 207.2 C99.4 211.6 101.6 216.9 103.5 220.6 C105.4 224.3 106.1 227.8 109.3 229.2 C112.5 230.6 120.1 227.1 122.7 229.2 C125.2 231.3 124.0 236.4 124.6 241.7 C125.2 246.9 126.8 255.7 126.5 260.8 C126.2 266.0 125.2 270.3 122.7 272.3 C120.1 274.4 115.0 274.3 111.2 273.3 C107.3 272.3 103.2 269.0 99.7 266.6 C96.2 264.2 92.6 262.4 90.1 258.9 C87.5 255.4 86.6 250.3 84.3 245.5 C82.1 240.7 79.5 234.6 76.7 230.2 C73.8 225.7 69.3 221.5 67.1 218.7 C64.9 215.8 63.9 213.9 63.3 212.9" fill="none" stroke="#ffffff" stroke-width="1.3" stroke-linecap="round" stroke-linejoin="round"/>
<path d="M47.9 212.9 C47.8 215.8 46.6 224.7 47.0 230.2 C47.3 235.6 49.7 240.4 49.8 245.5 C50.0 250.6 48.2 258.3 47.9 260.8" fill="none" stroke="#ffffff" stroke-width="1.2" stroke-linecap="round" stroke-linejoin="round"/>
<path d="M122.7 193.8 C123.0 196.6 124.6 205.1 124.6 211.0 C124.6 216.9 123.0 226.2 122.7 229.2" fill="none" stroke="#ffffff" stroke-width="1.1" stroke-linecap="round" stroke-linejoin="round"/>
<path d="M0.0 195.7 C3.2 195.3 11.2 193.8 19.2 193.8 C27.2 193.8 39.0 195.7 47.9 195.7 C56.9 195.7 65.2 194.1 72.8 193.8 C80.5 193.4 90.4 193.8 93.9 193.8" fill="none" stroke="#ffffff" stroke-width="1.2" stroke-linecap="round" stroke-linejoin="round"/>
<path d="M370.8 26.8 C372.8 25.9 378.5 22.7 382.3 21.1 C386.2 19.5 391.3 19.5 393.8 17.3 C396.4 15.0 397.4 10.5 397.7 7.7 C398.0 4.8 396.1 1.3 395.8 0.0" fill="none" stroke="#ffffff" stroke-width="1.6" stroke-linecap="round" stroke-linejoin="round"/>
<path d="M382.3 40.3 C384.9 39.9 392.6 39.0 397.7 38.3 C402.8 37.7 410.5 36.7 413.0 36.4" fill="none" stroke="#ffffff" stroke-width="1.3" stroke-linecap="round" stroke-linejoin="round"/>
<path d="M378.5 59.4 C380.4 60.1 386.8 61.7 390.0 63.3 C393.2 64.9 396.4 68.0 397.7 69.0" fill="none" stroke="#ffffff" stroke-width="1.2" stroke-linecap="round" stroke-linejoin="round"/>
<path d="M57.5 15.3 C61.3 15.7 73.5 16.3 80.5 17.3 C87.5 18.2 93.9 18.8 99.7 21.1 C105.4 23.3 112.5 29.1 115.0 30.7" fill="none" stroke="#ffffff" stroke-width="1.2" stroke-linecap="round" stroke-linejoin="round"/>
<path d="M57.5 15.3 C58.1 17.6 60.1 24.3 61.3 28.8 C62.6 33.2 64.5 39.9 65.2 42.2" fill="none" stroke="#ffffff" stroke-width="1.2" stroke-linecap="round" stroke-linejoin="round"/>
<path d="M80.5 63.3 C83.1 62.3 91.4 58.1 95.8 57.5 C100.3 56.9 105.4 59.1 107.3 59.4" fill="none" stroke="#ffffff" stroke-width="1.2" stroke-linecap="round" stroke-linejoin="round"/>
<path d="M134.2 36.4 C136.1 38.0 142.5 42.5 145.7 46.0 C148.9 49.5 152.7 53.0 153.3 57.5 C154.0 62.0 150.2 70.3 149.5 72.8" fill="none" stroke="#ffffff" stroke-width="1.2" stroke-linecap="round" stroke-linejoin="round"/>
<path d="M328.7 118.9 C330.6 121.2 337.0 128.2 340.2 132.3 C343.4 136.5 344.6 140.6 347.8 143.8 C351.0 147.0 354.9 150.2 359.3 151.5 C363.8 152.8 372.1 151.5 374.7 151.5" fill="none" stroke="#ffffff" stroke-width="1.2" stroke-linecap="round" stroke-linejoin="round"/>
<path d="M380.4 145.8 C383.3 145.4 392.3 144.8 397.7 143.8 C403.1 142.9 410.5 140.6 413.0 140.0" fill="none" stroke="#ffffff" stroke-width="1.3" stroke-linecap="round" stroke-linejoin="round"/>
<path d="M269.3 211.0 C269.6 213.6 268.3 220.9 271.2 226.3 C274.0 231.8 280.8 238.2 286.5 243.6 C292.3 249.0 299.9 255.4 305.7 258.9 C311.4 262.4 316.5 263.1 321.0 264.7 C325.5 266.3 330.6 267.9 332.5 268.5" fill="none" stroke="#ffffff" stroke-width="1.2" stroke-linecap="round" stroke-linejoin="round"/>
<path d="M286.5 243.6 C286.8 247.1 287.8 258.5 288.4 264.7 C289.1 270.8 290.0 277.9 290.3 280.6" fill="none" stroke="#ffffff" stroke-width="1.1" stroke-linecap="round" stroke-linejoin="round"/>
<path d="M0.0 132.3 C1.9 133.0 8.9 133.0 11.5 136.2 C14.1 139.4 15.3 146.4 15.3 151.5 C15.3 156.6 12.1 164.3 11.5 166.8" fill="none" stroke="#ffffff" stroke-width="1.2" stroke-linecap="round" stroke-linejoin="round"/>
<path d="M107.3 105.5 C108.6 107.4 112.5 112.5 115.0 117.0 C117.6 121.5 121.4 129.8 122.7 132.3" fill="none" stroke="#ffffff" stroke-width="1.2" stroke-linecap="round" stroke-linejoin="round"/>
<path d="M107.3 128.5 C109.3 130.4 114.4 137.8 118.8 140.0 C123.3 142.2 131.6 141.6 134.2 141.9" fill="none" stroke="#ffffff" stroke-width="1.1" stroke-linecap="round" stroke-linejoin="round"/>
<path d="M3.8 94.0 C4.5 97.8 6.4 109.0 7.7 117.0 C8.9 125.0 9.6 135.2 11.5 141.9 C13.4 148.6 17.9 154.7 19.2 157.3" fill="none" stroke="#b29cc0" stroke-width="1.200" stroke-dasharray="3.500 .8" opacity=".85"/>
<path d="M61.3 141.9 C65.2 140.8 76.7 137.4 84.3 135.2 C92.0 133.0 102.2 128.0 107.3 128.5 C112.5 129.0 110.5 137.4 115.0 138.1 C119.5 138.7 127.1 135.9 134.2 132.3 C141.2 128.8 153.3 119.6 157.2 117.0" fill="none" stroke="#b29cc0" stroke-width="1.200" stroke-dasharray="3.500 .8" opacity=".85"/>
<path d="M78.6 147.7 C79.2 150.9 81.1 160.1 82.4 166.8 C83.7 173.5 85.6 184.4 86.3 187.9" fill="none" stroke="#b29cc0" stroke-width="1.200" stroke-dasharray="3.500 .8" opacity=".85"/>
<path d="M0 191 L36 191 L39 205.500 L49 199.500 L59 192.200 L95 191.600" fill="none" stroke="#b29cc0" stroke-width="1.100" stroke-dasharray="3.500 .8" opacity=".8"/>
<path d="M85.500 191 L83 165 L78 146" fill="none" stroke="#b29cc0" stroke-width="1.100" stroke-dasharray="3 1" opacity=".8"/>
<path d="M206.0 216.8 C207.9 217.4 214.0 217.1 217.5 220.6 C221.0 224.1 224.5 233.0 227.1 237.8 C229.6 242.6 225.8 246.5 232.8 249.3 C239.9 252.2 260.3 257.3 269.3 255.1 C278.2 252.9 282.0 241.0 286.5 235.9 C291.0 230.8 294.5 226.3 296.1 224.4" fill="none" stroke="#b29cc0" stroke-width="1.200" stroke-dasharray="3.500 .8" opacity=".85"/>
<path d="M299.9 230.2 C301.5 230.8 306.0 234.6 309.5 234.0 C313.0 233.4 319.1 227.6 321.0 226.3" fill="none" stroke="#b29cc0" stroke-width="1.200" stroke-dasharray="3.500 .8" opacity=".85"/>
<path d="M321.0 226.3 C322.3 229.5 326.4 238.5 328.7 245.5 C330.9 252.5 333.5 264.7 334.4 268.5" fill="none" stroke="#b29cc0" stroke-width="1.200" stroke-dasharray="3.500 .8" opacity=".85"/>
<path d="M338.3 262.8 C339.2 257.3 341.1 237.2 344.0 230.2 C346.9 223.1 349.8 222.5 355.5 220.6 C361.3 218.7 374.8 221.9 378.5 218.7 C382.2 215.5 375.6 204.1 377.6 201.4 C379.5 198.7 387.9 202.2 390.0 202.4" fill="none" stroke="#b29cc0" stroke-width="1.200" stroke-dasharray="3.500 .8" opacity=".85"/>
<path d="M184.0 195.7 C185.0 199.2 185.9 212.6 189.8 216.8 C193.6 220.9 204.1 219.9 207.0 220.6" fill="none" stroke="#b29cc0" stroke-width="1.200" stroke-dasharray="3.500 .8" opacity=".85"/>
<path d="M207.0 186.0 C204.8 180.3 195.5 161.1 193.6 151.5 C191.7 141.9 195.2 132.3 195.5 128.5" fill="none" stroke="#b29cc0" stroke-width="1.200" stroke-dasharray="3.500 .8" opacity=".85"/>
<path d="M246.3 9.6 C250.1 9.6 263.2 9.8 269.3 10.0 C275.3 10.1 278.5 10.6 282.7 10.5 C286.8 10.5 292.3 9.7 294.2 9.6" fill="none" stroke="#d2cd80" stroke-width="4.2" stroke-linecap="round" stroke-linejoin="round"/>
<path d="M247.2 21.1 C248.0 22.4 250.2 25.9 252.0 28.8 C253.8 31.6 256.2 35.5 257.8 38.3 C259.4 41.2 257.4 44.6 261.6 46.0 C265.7 47.4 276.6 46.6 282.7 47.0 C288.7 47.3 292.9 48.1 298.0 47.9 C303.1 47.8 308.2 47.1 313.3 46.0 C318.5 44.9 323.6 43.0 328.7 41.2 C333.8 39.5 338.9 37.2 344.0 35.5 C349.1 33.7 354.9 32.1 359.3 30.7 C363.8 29.2 368.9 27.5 370.8 26.8" fill="none" stroke="#d2cd80" stroke-width="4.2" stroke-linecap="round" stroke-linejoin="round"/>
<path d="M261.6 46.0 C261.9 47.9 262.9 53.7 263.5 57.5 C264.1 61.3 264.8 65.2 265.4 69.0 C266.1 72.8 266.5 76.4 267.3 80.5 C268.1 84.7 269.4 89.8 270.2 93.9 C271.0 98.1 271.7 101.6 272.1 105.4 C272.6 109.3 272.3 113.4 273.1 116.9 C273.9 120.4 275.3 124.1 276.9 126.5 C278.5 128.9 279.5 130.3 282.7 131.3 C285.9 132.3 291.3 132.2 296.1 132.3 C300.9 132.3 306.5 131.8 311.4 131.7 C316.4 131.5 323.4 131.4 325.8 131.3" fill="none" stroke="#d2cd80" stroke-width="4.1" stroke-linecap="round" stroke-linejoin="round"/>
<path d="M61.3 135.2 C60.9 137.9 59.4 145.6 58.5 151.5 C57.5 157.4 56.5 164.6 55.6 170.7 C54.6 176.7 53.7 182.8 52.7 187.9 C51.8 193.0 50.6 198.1 49.8 201.3 C49.0 204.5 48.2 206.1 47.9 207.1" fill="none" stroke="#d2cd80" stroke-width="2.3" stroke-linecap="round" stroke-linejoin="round"/>
<path d="M119.8 12.5 L126.5 16.3" fill="none" stroke="#d2cd80" stroke-width="3.6" stroke-linecap="round" stroke-linejoin="round"/>
<path d="M395.8 63.3 C397.4 63.9 402.3 64.9 405.3 67.1 C408.4 69.3 412.5 75.1 414.0 76.7" fill="none" stroke="#b9b36a" stroke-width="3.5999999999999996" stroke-linecap="round" stroke-linejoin="round"/>
<path d="M246.3 9.6 C250.1 9.6 263.2 9.8 269.3 10.0 C275.3 10.1 278.5 10.6 282.7 10.5 C286.8 10.5 292.3 9.7 294.2 9.6" fill="none" stroke="#f4f1a8" stroke-width="3.5" stroke-linecap="round" stroke-linejoin="round"/>
<path d="M247.2 21.1 C248.0 22.4 250.2 25.9 252.0 28.8 C253.8 31.6 256.2 35.5 257.8 38.3 C259.4 41.2 257.4 44.6 261.6 46.0 C265.7 47.4 276.6 46.6 282.7 47.0 C288.7 47.3 292.9 48.1 298.0 47.9 C303.1 47.8 308.2 47.1 313.3 46.0 C318.5 44.9 323.6 43.0 328.7 41.2 C333.8 39.5 338.9 37.2 344.0 35.5 C349.1 33.7 354.9 32.1 359.3 30.7 C363.8 29.2 368.9 27.5 370.8 26.8" fill="none" stroke="#f4f1a8" stroke-width="3.5" stroke-linecap="round" stroke-linejoin="round"/>
<path d="M261.6 46.0 C261.9 47.9 262.9 53.7 263.5 57.5 C264.1 61.3 264.8 65.2 265.4 69.0 C266.1 72.8 266.5 76.4 267.3 80.5 C268.1 84.7 269.4 89.8 270.2 93.9 C271.0 98.1 271.7 101.6 272.1 105.4 C272.6 109.3 272.3 113.4 273.1 116.9 C273.9 120.4 275.3 124.1 276.9 126.5 C278.5 128.9 279.5 130.3 282.7 131.3 C285.9 132.3 291.3 132.2 296.1 132.3 C300.9 132.3 306.5 131.8 311.4 131.7 C316.4 131.5 323.4 131.4 325.8 131.3" fill="none" stroke="#f4f1a8" stroke-width="3.4" stroke-linecap="round" stroke-linejoin="round"/>
<path d="M61.3 135.2 C60.9 137.9 59.4 145.6 58.5 151.5 C57.5 157.4 56.5 164.6 55.6 170.7 C54.6 176.7 53.7 182.8 52.7 187.9 C51.8 193.0 50.6 198.1 49.8 201.3 C49.0 204.5 48.2 206.1 47.9 207.1" fill="none" stroke="#f4f1a8" stroke-width="1.8" stroke-linecap="round" stroke-linejoin="round"/>
<path d="M119.8 12.5 L126.5 16.3" fill="none" stroke="#f4f1a8" stroke-width="3" stroke-linecap="round" stroke-linejoin="round"/>
<path d="M395.8 63.3 C397.4 63.9 402.3 64.9 405.3 67.1 C408.4 69.3 412.5 75.1 414.0 76.7" fill="none" stroke="#f4f1a8" stroke-width="2.8" stroke-linecap="round" stroke-linejoin="round"/>
<path d="M67.1 52.7 L80.5 47.0 L92.0 43.1 L104.5 40.6" fill="none" stroke="#f3ee9e" stroke-width="1.600" stroke-dasharray="2 2.500"/>
<path d="M72.1 -1.5 C71.9 -1.2 72.3 -1.6 71.1 0.4 C70.0 2.4 67.2 7.1 65.2 10.5 C63.2 14.0 61.5 17.5 59.0 20.9 C56.6 24.2 53.8 27.2 50.6 30.7 C47.4 34.1 43.1 38.4 39.7 41.6 C36.3 44.8 33.3 48.0 30.1 50.0 C26.9 52.1 24.0 52.8 20.3 54.1 C16.6 55.3 11.7 56.4 8.1 57.7 C4.4 59.0 0.1 61.1 -1.5 61.7" fill="none" stroke="#c38c44" stroke-width="4.6" stroke-linecap="round" stroke-linejoin="round"/>
<path d="M148.2 -1.0 C146.5 0.5 141.3 5.0 138.0 7.7 C134.7 10.4 131.0 12.5 128.4 15.3 C125.9 18.2 124.3 21.4 122.7 24.9 C121.1 28.4 120.4 32.6 118.8 36.4 C117.2 40.3 115.0 44.1 113.1 47.9 C111.2 51.8 109.3 55.6 107.3 59.4 C105.4 63.3 103.3 67.1 101.6 70.9 C99.8 74.8 98.4 78.6 96.8 82.4 C95.2 86.3 93.4 90.7 92.0 93.9 C90.6 97.1 90.1 98.7 88.2 101.6 C86.3 104.5 83.1 108.0 80.5 111.2 C78.0 114.4 75.7 117.6 72.8 120.8 C70.0 124.0 66.4 127.6 63.3 130.3 C60.1 133.1 57.2 135.0 53.7 137.1 C50.2 139.1 46.3 141.2 42.2 142.8 C38.0 144.4 33.2 145.5 28.8 146.6 C24.3 147.8 20.3 148.2 15.3 149.5 C10.4 150.8 1.8 153.7 -1.0 154.5" fill="none" stroke="#c38c44" stroke-width="4.7" stroke-linecap="round" stroke-linejoin="round"/>
<path d="M293.2 -1.0 C293.7 1.1 295.0 7.2 296.1 11.5 C297.2 15.8 298.8 20.4 299.9 24.9 C301.0 29.4 301.8 34.2 302.8 38.3 C303.8 42.5 304.4 46.0 305.7 49.8 C307.0 53.7 309.2 57.5 310.5 61.3 C311.7 65.2 312.4 69.0 313.3 72.8 C314.3 76.7 315.4 80.8 316.2 84.3 C317.0 87.9 317.0 90.4 318.1 93.9 C319.3 97.4 321.5 101.6 322.9 105.4 C324.4 109.3 326.0 112.5 326.8 116.9 C327.6 121.4 327.2 127.1 327.7 132.3 C328.2 137.4 329.0 142.8 329.6 147.6 C330.3 152.4 330.8 156.4 331.6 161.0 C332.3 165.6 333.6 173.0 334.0 175.4" fill="none" stroke="#c38c44" stroke-width="4.6" stroke-linecap="round" stroke-linejoin="round"/>
<path d="M360.3 -1.0 C360.8 0.5 362.1 4.6 363.2 7.7 C364.3 10.7 365.1 14.4 367.0 17.3 C368.9 20.1 372.4 22.4 374.7 24.9 C376.9 27.5 379.0 30.0 380.4 32.6 C381.9 35.1 383.1 37.4 383.3 40.3 C383.5 43.1 382.2 46.6 381.4 49.8 C380.6 53.0 379.3 55.9 378.5 59.4 C377.7 62.9 377.2 67.1 376.6 70.9 C376.0 74.8 375.3 78.6 374.7 82.4 C374.0 86.3 372.8 89.8 372.8 93.9 C372.8 98.1 374.0 102.9 374.7 107.3 C375.3 111.8 375.8 116.6 376.6 120.8 C377.4 124.9 378.8 128.1 379.5 132.3 C380.1 136.4 380.3 141.2 380.4 145.7 C380.6 150.2 380.3 155.3 380.4 159.1 C380.6 162.9 380.7 165.5 381.4 168.7 C382.0 171.9 383.3 175.1 384.3 178.3 C385.2 181.5 386.0 184.3 387.1 187.8 C388.3 191.4 389.7 195.5 391.0 199.3 C392.3 203.2 393.5 207.0 394.8 210.8 C396.1 214.7 397.4 218.5 398.6 222.4 C399.9 226.2 401.2 229.7 402.5 233.9 C403.8 238.0 405.0 242.8 406.3 247.3 C407.6 251.7 409.0 256.5 410.1 260.7 C411.3 264.8 412.5 270.3 413.0 272.2" fill="none" stroke="#c38c44" stroke-width="4.6" stroke-linecap="round" stroke-linejoin="round"/>
<path d="M72.1 -1.5 C71.9 -1.2 72.3 -1.6 71.1 0.4 C70.0 2.4 67.2 7.1 65.2 10.5 C63.2 14.0 61.5 17.5 59.0 20.9 C56.6 24.2 53.8 27.2 50.6 30.7 C47.4 34.1 43.1 38.4 39.7 41.6 C36.3 44.8 33.3 48.0 30.1 50.0 C26.9 52.1 24.0 52.8 20.3 54.1 C16.6 55.3 11.7 56.4 8.1 57.7 C4.4 59.0 0.1 61.1 -1.5 61.7" fill="none" stroke="#f7c88a" stroke-width="3.4" stroke-linecap="round" stroke-linejoin="round"/>
<path d="M148.2 -1.0 C146.5 0.5 141.3 5.0 138.0 7.7 C134.7 10.4 131.0 12.5 128.4 15.3 C125.9 18.2 124.3 21.4 122.7 24.9 C121.1 28.4 120.4 32.6 118.8 36.4 C117.2 40.3 115.0 44.1 113.1 47.9 C111.2 51.8 109.3 55.6 107.3 59.4 C105.4 63.3 103.3 67.1 101.6 70.9 C99.8 74.8 98.4 78.6 96.8 82.4 C95.2 86.3 93.4 90.7 92.0 93.9 C90.6 97.1 90.1 98.7 88.2 101.6 C86.3 104.5 83.1 108.0 80.5 111.2 C78.0 114.4 75.7 117.6 72.8 120.8 C70.0 124.0 66.4 127.6 63.3 130.3 C60.1 133.1 57.2 135.0 53.7 137.1 C50.2 139.1 46.3 141.2 42.2 142.8 C38.0 144.4 33.2 145.5 28.8 146.6 C24.3 147.8 20.3 148.2 15.3 149.5 C10.4 150.8 1.8 153.7 -1.0 154.5" fill="none" stroke="#f7c88a" stroke-width="3.5" stroke-linecap="round" stroke-linejoin="round"/>
<path d="M293.2 -1.0 C293.7 1.1 295.0 7.2 296.1 11.5 C297.2 15.8 298.8 20.4 299.9 24.9 C301.0 29.4 301.8 34.2 302.8 38.3 C303.8 42.5 304.4 46.0 305.7 49.8 C307.0 53.7 309.2 57.5 310.5 61.3 C311.7 65.2 312.4 69.0 313.3 72.8 C314.3 76.7 315.4 80.8 316.2 84.3 C317.0 87.9 317.0 90.4 318.1 93.9 C319.3 97.4 321.5 101.6 322.9 105.4 C324.4 109.3 326.0 112.5 326.8 116.9 C327.6 121.4 327.2 127.1 327.7 132.3 C328.2 137.4 329.0 142.8 329.6 147.6 C330.3 152.4 330.8 156.4 331.6 161.0 C332.3 165.6 333.6 173.0 334.0 175.4" fill="none" stroke="#f7c88a" stroke-width="3.4" stroke-linecap="round" stroke-linejoin="round"/>
<path d="M360.3 -1.0 C360.8 0.5 362.1 4.6 363.2 7.7 C364.3 10.7 365.1 14.4 367.0 17.3 C368.9 20.1 372.4 22.4 374.7 24.9 C376.9 27.5 379.0 30.0 380.4 32.6 C381.9 35.1 383.1 37.4 383.3 40.3 C383.5 43.1 382.2 46.6 381.4 49.8 C380.6 53.0 379.3 55.9 378.5 59.4 C377.7 62.9 377.2 67.1 376.6 70.9 C376.0 74.8 375.3 78.6 374.7 82.4 C374.0 86.3 372.8 89.8 372.8 93.9 C372.8 98.1 374.0 102.9 374.7 107.3 C375.3 111.8 375.8 116.6 376.6 120.8 C377.4 124.9 378.8 128.1 379.5 132.3 C380.1 136.4 380.3 141.2 380.4 145.7 C380.6 150.2 380.3 155.3 380.4 159.1 C380.6 162.9 380.7 165.5 381.4 168.7 C382.0 171.9 383.3 175.1 384.3 178.3 C385.2 181.5 386.0 184.3 387.1 187.8 C388.3 191.4 389.7 195.5 391.0 199.3 C392.3 203.2 393.5 207.0 394.8 210.8 C396.1 214.7 397.4 218.5 398.6 222.4 C399.9 226.2 401.2 229.7 402.5 233.9 C403.8 238.0 405.0 242.8 406.3 247.3 C407.6 251.7 409.0 256.5 410.1 260.7 C411.3 264.8 412.5 270.3 413.0 272.2" fill="none" stroke="#f7c88a" stroke-width="3.4" stroke-linecap="round" stroke-linejoin="round"/>
<path d="M367.0 17.3 C368.3 18.5 372.4 22.4 374.7 24.9 C376.9 27.5 379.5 31.3 380.4 32.6" fill="none" stroke="#8a6a3a" stroke-width="4.300" opacity=".55"/>
<path d="M367.0 17.3 C368.3 18.5 372.4 22.4 374.7 24.9 C376.9 27.5 379.5 31.3 380.4 32.6" fill="none" stroke="#f7c88a" stroke-width="2.600"/>
<path d="M-1.0 24.0 C0.5 25.4 2.7 28.1 7.7 32.6 C12.6 37.1 23.6 46.0 28.8 50.8 C33.9 55.6 35.1 57.5 38.3 61.3 C41.5 65.2 44.7 70.0 47.9 73.8 C51.1 77.6 54.9 81.0 57.5 84.3 C60.1 87.7 60.1 90.1 63.3 93.9 C66.4 97.8 72.2 102.5 76.7 107.3 C81.1 112.1 85.6 117.9 90.1 122.7 C94.6 127.5 99.4 131.9 103.5 136.1 C107.7 140.2 111.8 143.8 115.0 147.6 C118.2 151.4 119.8 154.9 122.7 159.1 C125.6 163.2 129.1 168.7 132.3 172.5 C135.5 176.3 139.3 179.5 141.8 182.1 C144.4 184.7 145.4 185.3 147.6 187.8 C149.8 190.4 152.7 193.9 155.3 197.4 C157.8 200.9 160.5 205.4 162.9 208.9 C165.3 212.4 168.2 215.3 169.6 218.5 C171.1 221.7 171.7 224.9 171.6 228.1 C171.4 231.3 169.8 234.5 168.7 237.7 C167.6 240.9 165.2 244.4 164.8 247.3 C164.5 250.1 165.2 252.4 166.8 254.9 C168.4 257.5 172.2 260.0 174.4 262.6 C176.7 265.2 178.6 266.8 180.2 270.3 C181.7 273.8 183.1 281.5 183.6 283.7" fill="none" stroke="#e18c74" stroke-width="5.7" stroke-linecap="round" stroke-linejoin="round"/>
<path d="M109.3 140.0 C111.8 141.3 118.5 145.1 124.6 147.7 C130.7 150.2 139.0 153.1 145.7 155.3 C152.4 157.6 158.5 159.0 164.8 161.1 C171.2 163.2 178.3 165.9 184.0 167.8 C189.8 169.7 195.5 171.3 199.3 172.6 C203.2 173.9 204.0 174.5 207.0 175.5 C210.1 176.4 213.7 177.2 217.6 178.3 C221.4 179.5 225.7 181.3 230.0 182.6 C234.3 183.8 239.3 185.4 243.4 186.0 C247.6 186.6 253.0 186.3 254.9 186.4" fill="none" stroke="#e18c74" stroke-width="5.2" stroke-linecap="round" stroke-linejoin="round"/>
<path d="M253.9 187.2 C255.5 187.2 258.7 187.2 263.5 187.2 C268.3 187.1 277.2 187.3 282.7 186.8 C288.1 186.3 291.6 185.3 296.1 184.3 C300.6 183.2 304.7 181.4 309.5 180.4 C314.3 179.5 319.7 179.4 324.8 178.5 C330.0 177.7 336.3 176.6 340.2 175.5 C344.0 174.3 345.6 173.4 347.8 171.8 C350.1 170.3 351.4 167.7 353.6 166.3 C355.8 164.9 358.4 163.5 361.3 163.4 C364.1 163.2 368.0 164.1 370.8 165.3 C373.7 166.5 375.3 169.3 378.5 170.7 C381.7 172.0 385.5 172.6 390.0 173.4 C394.5 174.1 401.4 174.7 405.3 175.1 C409.3 175.5 412.5 175.7 414.0 175.8" fill="none" stroke="#e18c74" stroke-width="5.2" stroke-linecap="round" stroke-linejoin="round"/>
<path d="M340.2 175.7 C342.7 175.5 350.4 175.1 355.5 174.7 C360.6 174.3 366.7 173.6 370.8 173.2 C375.0 172.7 378.8 172.0 380.4 171.8" fill="none" stroke="#e18c74" stroke-width="4.5" stroke-linecap="round" stroke-linejoin="round"/>
<path d="M244.9 -1.0 C244.8 2.4 244.7 12.6 244.5 19.2 C244.3 25.7 244.1 31.3 243.8 38.3 C243.4 45.4 243.0 55.1 242.6 61.3 C242.2 67.6 241.2 71.9 241.3 75.7 C241.3 79.5 242.2 81.3 242.8 84.3 C243.4 87.4 244.4 90.4 244.9 93.9 C245.4 97.4 245.6 101.3 245.9 105.4 C246.2 109.6 246.4 114.4 246.6 118.8 C246.8 123.3 246.9 127.5 247.0 132.3 C247.1 137.1 247.2 142.5 247.2 147.6 C247.2 152.7 247.1 157.8 247.2 162.9 C247.3 168.0 247.2 174.1 247.6 178.3 C248.0 182.4 249.1 184.5 249.7 188.0 C250.3 191.6 250.3 195.2 251.0 199.3 C251.8 203.5 253.3 208.3 254.3 212.8 C255.3 217.2 256.3 222.0 256.8 226.2 C257.3 230.3 257.7 233.9 257.2 237.7 C256.7 241.5 255.4 245.7 253.9 249.2 C252.5 252.7 250.0 255.9 248.6 258.8 C247.1 261.6 246.0 263.9 245.3 266.4 C244.6 269.0 244.3 271.2 244.3 274.1 C244.3 277.0 245.1 282.1 245.3 283.7" fill="none" stroke="#e18c74" stroke-width="5.300000000000001" stroke-linecap="round" stroke-linejoin="round"/>
<path d="M-1.0 24.0 C0.5 25.4 2.7 28.1 7.7 32.6 C12.6 37.1 23.6 46.0 28.8 50.8 C33.9 55.6 35.1 57.5 38.3 61.3 C41.5 65.2 44.7 70.0 47.9 73.8 C51.1 77.6 54.9 81.0 57.5 84.3 C60.1 87.7 60.1 90.1 63.3 93.9 C66.4 97.8 72.2 102.5 76.7 107.3 C81.1 112.1 85.6 117.9 90.1 122.7 C94.6 127.5 99.4 131.9 103.5 136.1 C107.7 140.2 111.8 143.8 115.0 147.6 C118.2 151.4 119.8 154.9 122.7 159.1 C125.6 163.2 129.1 168.7 132.3 172.5 C135.5 176.3 139.3 179.5 141.8 182.1 C144.4 184.7 145.4 185.3 147.6 187.8 C149.8 190.4 152.7 193.9 155.3 197.4 C157.8 200.9 160.5 205.4 162.9 208.9 C165.3 212.4 168.2 215.3 169.6 218.5 C171.1 221.7 171.7 224.9 171.6 228.1 C171.4 231.3 169.8 234.5 168.7 237.7 C167.6 240.9 165.2 244.4 164.8 247.3 C164.5 250.1 165.2 252.4 166.8 254.9 C168.4 257.5 172.2 260.0 174.4 262.6 C176.7 265.2 178.6 266.8 180.2 270.3 C181.7 273.8 183.1 281.5 183.6 283.7" fill="none" stroke="#f5a890" stroke-width="4.8" stroke-linecap="round" stroke-linejoin="round"/>
<path d="M109.3 140.0 C111.8 141.3 118.5 145.1 124.6 147.7 C130.7 150.2 139.0 153.1 145.7 155.3 C152.4 157.6 158.5 159.0 164.8 161.1 C171.2 163.2 178.3 165.9 184.0 167.8 C189.8 169.7 195.5 171.3 199.3 172.6 C203.2 173.9 204.0 174.5 207.0 175.5 C210.1 176.4 213.7 177.2 217.6 178.3 C221.4 179.5 225.7 181.3 230.0 182.6 C234.3 183.8 239.3 185.4 243.4 186.0 C247.6 186.6 253.0 186.3 254.9 186.4" fill="none" stroke="#f5a890" stroke-width="4.3" stroke-linecap="round" stroke-linejoin="round"/>
<path d="M253.9 187.2 C255.5 187.2 258.7 187.2 263.5 187.2 C268.3 187.1 277.2 187.3 282.7 186.8 C288.1 186.3 291.6 185.3 296.1 184.3 C300.6 183.2 304.7 181.4 309.5 180.4 C314.3 179.5 319.7 179.4 324.8 178.5 C330.0 177.7 336.3 176.6 340.2 175.5 C344.0 174.3 345.6 173.4 347.8 171.8 C350.1 170.3 351.4 167.7 353.6 166.3 C355.8 164.9 358.4 163.5 361.3 163.4 C364.1 163.2 368.0 164.1 370.8 165.3 C373.7 166.5 375.3 169.3 378.5 170.7 C381.7 172.0 385.5 172.6 390.0 173.4 C394.5 174.1 401.4 174.7 405.3 175.1 C409.3 175.5 412.5 175.7 414.0 175.8" fill="none" stroke="#f5a890" stroke-width="4.3" stroke-linecap="round" stroke-linejoin="round"/>
<path d="M340.2 175.7 C342.7 175.5 350.4 175.1 355.5 174.7 C360.6 174.3 366.7 173.6 370.8 173.2 C375.0 172.7 378.8 172.0 380.4 171.8" fill="none" stroke="#f5a890" stroke-width="3.6" stroke-linecap="round" stroke-linejoin="round"/>
<path d="M244.9 -1.0 C244.8 2.4 244.7 12.6 244.5 19.2 C244.3 25.7 244.1 31.3 243.8 38.3 C243.4 45.4 243.0 55.1 242.6 61.3 C242.2 67.6 241.2 71.9 241.3 75.7 C241.3 79.5 242.2 81.3 242.8 84.3 C243.4 87.4 244.4 90.4 244.9 93.9 C245.4 97.4 245.6 101.3 245.9 105.4 C246.2 109.6 246.4 114.4 246.6 118.8 C246.8 123.3 246.9 127.5 247.0 132.3 C247.1 137.1 247.2 142.5 247.2 147.6 C247.2 152.7 247.1 157.8 247.2 162.9 C247.3 168.0 247.2 174.1 247.6 178.3 C248.0 182.4 249.1 184.5 249.7 188.0 C250.3 191.6 250.3 195.2 251.0 199.3 C251.8 203.5 253.3 208.3 254.3 212.8 C255.3 217.2 256.3 222.0 256.8 226.2 C257.3 230.3 257.7 233.9 257.2 237.7 C256.7 241.5 255.4 245.7 253.9 249.2 C252.5 252.7 250.0 255.9 248.6 258.8 C247.1 261.6 246.0 263.9 245.3 266.4 C244.6 269.0 244.3 271.2 244.3 274.1 C244.3 277.0 245.1 282.1 245.3 283.7" fill="none" stroke="#f5a890" stroke-width="4.4" stroke-linecap="round" stroke-linejoin="round"/>
<path d="M318.1 216.8 C318.9 216.4 321.5 214.2 322.9 214.8 C324.4 215.5 325.5 218.2 326.8 220.6 C328.0 223.0 328.4 227.1 330.6 229.2 C332.8 231.3 338.1 231.6 340.2 233.0 C342.3 234.5 342.7 235.1 343.1 237.8 C343.4 240.6 342.9 245.2 342.1 249.3 C341.3 253.5 339.5 259.6 338.3 262.8 C337.0 266.0 335.5 268.2 334.4 268.5 C333.3 268.8 332.3 267.2 331.6 264.7 C330.8 262.1 330.3 257.3 329.6 253.2 C329.0 249.0 328.7 243.6 327.7 239.8 C326.8 235.9 325.2 233.0 323.9 230.2 C322.6 227.3 321.0 224.7 320.1 222.5 C319.1 220.3 318.5 217.7 318.1 216.8" fill="none" stroke="#a9d49c" stroke-width="1.500"/>
<path d="M7.7 232.1 C8.6 234.0 13.1 239.1 13.4 243.6 C13.7 248.1 10.2 256.4 9.6 258.9" fill="none" stroke="#f0a488" stroke-width=".8" stroke-dasharray="1.500 1.500" opacity=".8"/>
<path d="M21.1 222.5 C21.5 224.1 23.7 229.5 23.4 232.1 C23.1 234.6 19.9 236.9 19.2 237.8" fill="none" stroke="#f0a488" stroke-width=".8" stroke-dasharray="1.500 1.500" opacity=".8"/>
<path d="M70.9 243.6 C72.2 244.9 77.6 248.9 78.6 251.3 C79.5 253.7 77.0 256.8 76.7 258.0" fill="none" stroke="#f0a488" stroke-width=".8" stroke-dasharray="1.500 1.500" opacity=".8"/>
<path d="M153.3 234.0 C154.9 232.9 161.0 229.5 162.9 227.3 C164.8 225.1 164.5 221.7 164.8 220.6" fill="none" stroke="#f0a488" stroke-width=".8" stroke-dasharray="1.500 1.500" opacity=".8"/>
<path d="M19.2 260.8 C20.8 262.8 27.5 269.1 28.8 272.3 C30.0 275.5 27.2 278.7 26.8 280.0" fill="none" stroke="#f0a488" stroke-width=".8" stroke-dasharray="1.500 1.500" opacity=".8"/>
<path d="M24.9 138.1 L32.6 140.0" fill="none" stroke="#f0a488" stroke-width=".8" stroke-dasharray="1.500 1.500" opacity=".8"/>
<path d="M301.8 226.3 L303.8 229.2" fill="none" stroke="#f0a488" stroke-width=".8" stroke-dasharray="1.500 1.500" opacity=".8"/>
<path d="M313.3 245.5 L321.0 251.3" fill="none" stroke="#f0a488" stroke-width=".8" stroke-dasharray="1.500 1.500" opacity=".8"/>
<text x="71.9" y="13.0" font-size="8.4" fill="#484848" textLength="47.9" lengthAdjust="spacingAndGlyphs" stroke="#484848" stroke-width=".22" filter="url(#halo)" >Karve Nagar</text>
<text x="81.5" y="60.9" font-size="8.4" fill="#484848" textLength="51.8" lengthAdjust="spacingAndGlyphs" stroke="#484848" stroke-width=".22" filter="url(#halo)" >Anandnagar</text>
<text x="98.7" y="81.0" font-size="8.4" fill="#484848" textLength="47.0" lengthAdjust="spacingAndGlyphs" stroke="#484848" stroke-width=".22" filter="url(#halo)" >Tukai Nagar</text>
<text x="174.0" y="10.7" font-size="8.4" fill="#484848" textLength="58.3" lengthAdjust="spacingAndGlyphs" stroke="#484848" stroke-width=".22" filter="url(#halo)" >Sahakar Nagar</text>
<text x="-2.3" y="46.2" font-size="8.4" fill="#484848" textLength="10.0" lengthAdjust="spacingAndGlyphs" stroke="#484848" stroke-width=".22" filter="url(#halo)" >Wa</text>
<text x="32.6" y="79.4" font-size="6.6" fill="#c05a42" textLength="34.5" lengthAdjust="spacingAndGlyphs" stroke="#c05a42" stroke-width=".22" filter="url(#halo)" font-style="italic">Suncity exit</text>
<text x="165.2" y="71.7" font-size="6.4" fill="#7c9477" textLength="35.5" lengthAdjust="spacingAndGlyphs" font-style="italic">Taljai forest</text>
<text x="79.5" y="107.9" font-size="8.4" fill="#484848" textLength="66.1" lengthAdjust="spacingAndGlyphs" stroke="#484848" stroke-width=".22" filter="url(#halo)" >Vadgaon Budruk</text>
<text x="392.9" y="17.6" font-size="8.4" fill="#484848" textLength="41.2" lengthAdjust="spacingAndGlyphs" stroke="#484848" stroke-width=".22" filter="url(#halo)" >Wanawadi</text>
<text x="375.6" y="62.8" font-size="8.4" fill="#484848" textLength="38.9" lengthAdjust="spacingAndGlyphs" stroke="#484848" stroke-width=".22" filter="url(#halo)" >Kondhwa</text>
<text x="228.6" y="168.7" font-size="8.4" fill="#484848" textLength="22.4" lengthAdjust="spacingAndGlyphs" stroke="#484848" stroke-width=".22" filter="url(#halo)" >Katraj</text>
<text x="332.5" y="150.7" font-size="8.4" fill="#484848" textLength="62.3" lengthAdjust="spacingAndGlyphs" stroke="#484848" stroke-width=".22" filter="url(#halo)" >Kondhwa Budruk</text>
<text x="70.9" y="238.2" font-size="8.4" fill="#484848" textLength="32.6" lengthAdjust="spacingAndGlyphs" stroke="#484848" stroke-width=".22" filter="url(#halo)" >Dhayari</text>
<path id="svm" d="M261.6 46.0 C261.9 47.9 262.9 53.7 263.5 57.5 C264.1 61.3 264.8 65.2 265.4 69.0 C266.1 72.8 266.5 76.4 267.3 80.5 C268.1 84.7 269.4 89.8 270.2 93.9 C271.0 98.1 271.7 101.6 272.1 105.4 C272.6 109.3 272.9 115.0 273.1 116.9" fill="none"/>
<text font-size="5.400" fill="#4f4a20" opacity=".85" dy="1.900"><textPath href="#svm" startOffset="3" textLength="58" lengthAdjust="spacingAndGlyphs">Swami Vivekanand Marg</textPath></text>
<text transform="translate(248.4 159.2) rotate(-92.5)" x="0" y="1.9" font-size="5.4" fill="#6b3527" textLength="30.7" lengthAdjust="spacingAndGlyphs" opacity=".8">Satara Road</text>
<path id="byp" d="M147.6 188.0 C148.9 189.6 152.7 194.1 155.3 197.6 C157.8 201.1 160.5 205.6 162.9 209.1 C165.3 212.6 168.2 215.5 169.6 218.7 C171.1 221.9 171.7 225.1 171.6 228.3 C171.4 231.4 169.8 234.6 168.7 237.8 C167.6 241.0 165.2 244.5 164.8 247.4 C164.5 250.3 165.2 252.5 166.8 255.1 C168.4 257.6 173.2 261.5 174.4 262.8" fill="none"/>
<text font-size="5.400" fill="#6b3527" opacity=".85" dy="1.900"><textPath href="#byp" startOffset="3" textLength="56" lengthAdjust="spacingAndGlyphs">Katraj - Dehu Road Bypass</textPath></text>
<text transform="translate(171.6 163.4) rotate(17.9)" x="0" y="1.8" font-size="5" fill="#a06858" textLength="31.2" lengthAdjust="spacingAndGlyphs" opacity=".8">Katraj - Dehu Road</text>
<text transform="translate(278.5 244.0) rotate(-52.5)" x="0" y="2.7" font-size="7.6" fill="#8d7a9a" textLength="29.0" lengthAdjust="spacingAndGlyphs" opacity=".8">Pune City</text>
<text transform="translate(0.0 61.7) rotate(-28.1)" x="0" y="1.8" font-size="5" fill="#5a4a30" textLength="13.0" lengthAdjust="spacingAndGlyphs" opacity=".8">Road</text>
<text transform="translate(403.4 64.2) rotate(50.2)" x="0" y="1.8" font-size="5" fill="#4a4a20" textLength="15.0" lengthAdjust="spacingAndGlyphs" opacity=".8">NIBM</text>
<rect x="117.9" y="145.4" width="36.4" height="11.5" rx="1.300" fill="#f6d8c9" stroke="#d9a48e" stroke-width=".7"/>
<text x="136.1" y="153.6" font-size="6.800" fill="#8a3a22" text-anchor="middle" textLength="31.9" lengthAdjust="spacingAndGlyphs">NH548DD</text>
<rect x="243.4" y="238.8" width="23.0" height="12.1" rx="1.300" fill="#f6d8c9" stroke="#d9a48e" stroke-width=".7"/>
<text x="254.9" y="247.3" font-size="6.800" fill="#8a3a22" text-anchor="middle" textLength="18.5" lengthAdjust="spacingAndGlyphs">NH60</text>
<path d="M245.3 -1.0 L244.9 11.5 L244.3 24.9 L244.0 38.3 L243.4 49.8 L242.8 61.3 L239.5 66.1 L239.0 73.8 L234.8 74.4 L232.8 82.4 L229.0 93.9 L225.2 100.1 L217.5 105.8 L212.7 111.6 L211.4 116.9 L207.9 140.9" fill="none" stroke="#0000ff" stroke-width="3.800" stroke-linejoin="round" stroke-linecap="round"/>
<path d="M208.0 141.0l9-13c3-3.500 9-3 8 1-1 4-8 7-17 12z" fill="#000" opacity=".3" filter="url(#soft)"/>
<path d="M207.5 141.0c-1.300-5.600-8.600-11-8.600-19.500a8.600 8.600 0 0 1 17.200 0c0 8.500-7.300 13.900-8.600 19.500z" fill="#2e84cb" stroke="#2473b5" stroke-width=".7"/>
<circle cx="207.5" cy="120.7" r="3.300" fill="#fff"/>
<rect x="7" y="7" width="23.500" height="44.600" rx="3" fill="#000" opacity=".2"/>
<rect x="8.400" y="8.400" width="21" height="42" rx="2" fill="#fff"/>
<rect x="8.400" y="29.200" width="21" height=".7" fill="#ccc"/>
<path d="M14.800 18.800h8.200M18.900 14.700v8.200" stroke="#111" stroke-width="1.600"/>
<path d="M14.800 40h8.200" stroke="#111" stroke-width="1.600"/>
<rect x="249" y="270.300" width="164" height="11.500" fill="#fff" opacity=".82"/>
<rect x="252" y="273.700" width="8.300" height="2.600" fill="#4c7be1"/><rect x="252" y="276.300" width="8.300" height="2.600" fill="#ffd500"/>
<text x="262.500" y="279.200" font-size="8.100" fill="#0078a8" textLength="25" lengthAdjust="spacingAndGlyphs">Leaflet</text>
<text x="290.500" y="279.200" font-size="8.100" fill="#333" textLength="118.300" lengthAdjust="spacingAndGlyphs">| © OpenStreetMap contributors</text></svg>
</body>
</html>
